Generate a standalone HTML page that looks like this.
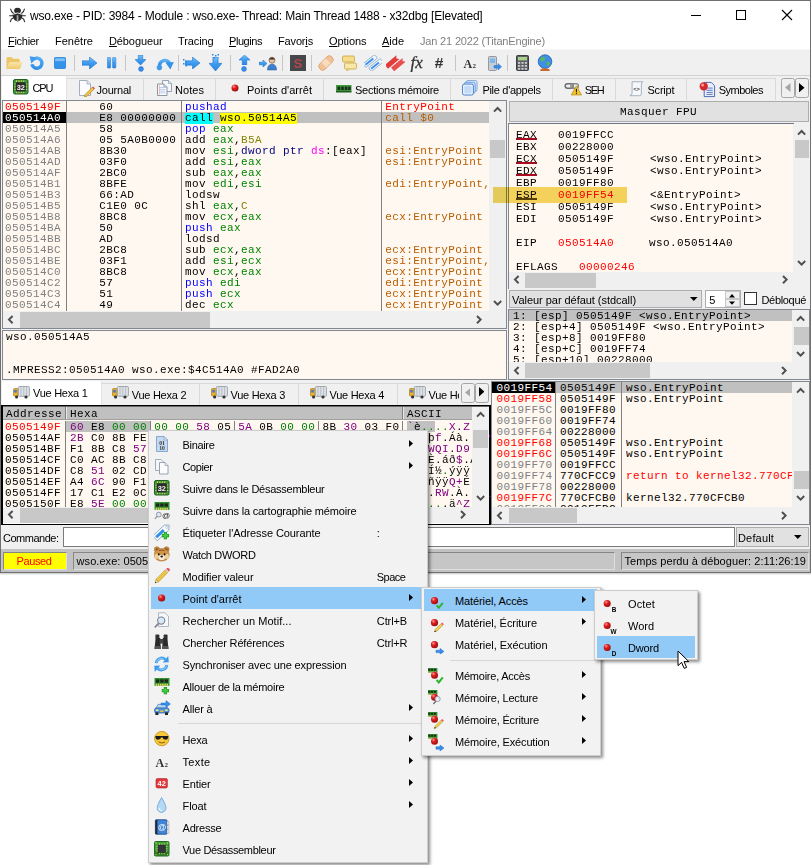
<!DOCTYPE html>
<html><head><meta charset="utf-8"><title>x32dbg</title><style>
html,body{margin:0;padding:0}
body{width:811px;height:865px;background:#fff;position:relative;overflow:hidden;font-family:'Liberation Sans',sans-serif}
body div,body svg{position:absolute;box-sizing:content-box}
.s{white-space:pre;font-family:'Liberation Sans',sans-serif}
.m{white-space:pre;font-family:'Liberation Mono',monospace;font-size:11px;line-height:11px;height:11px;letter-spacing:0.4px}
.m span{display:inline-block;height:11px;position:static}
u{text-decoration:underline}
</style></head><body>
<div style="left:0px;top:0px;width:811px;height:573px;background:#f0f0f0;"></div>
<div style="left:0px;top:0px;width:811px;height:1px;background:#6f6f6f;"></div>
<div style="left:0px;top:0px;width:1px;height:573px;background:#6f6f6f;"></div>
<div style="left:810px;top:0px;width:1px;height:573px;background:#6f6f6f;"></div>
<div style="left:0px;top:572px;width:811px;height:1px;background:#6f6f6f;"></div>
<div style="left:0px;top:573px;width:811px;height:1px;background:#d4d4d4;"></div>
<div style="left:0px;top:574px;width:811px;height:1px;background:#eeeeee;"></div>
<div style="left:1px;top:1px;width:809px;height:48px;background:#fff;"></div>
<div style="left:1px;top:49px;width:809px;height:1px;background:#f7f7f7;"></div>
<svg style="left:9px;top:6px" width="17" height="17" viewBox="0 0 17 17"><g fill="#2b2b2e" stroke="#2b2b2e" stroke-linecap="round">
<ellipse cx="8.5" cy="4.6" rx="3.4" ry="2.9" stroke="none"/>
<path d="M3.6,8.2 Q8.5,5.2 13.4,8.2 L13,11.5 Q11.5,15.2 8.5,15.4 Q5.5,15.2 4,11.5 Z" stroke="none"/>
<path d="M0.6,9.7 H16.4" stroke-width="1.1" fill="none"/>
<path d="M4.6,7.4 Q2,6 1.6,3" stroke-width="1.1" fill="none"/>
<path d="M12.4,7.4 Q15,6 15.4,3" stroke-width="1.1" fill="none"/>
<path d="M4.4,11.8 Q1.8,12.6 1.4,15.6" stroke-width="1.1" fill="none"/>
<path d="M12.6,11.8 Q15.2,12.6 15.6,15.6" stroke-width="1.1" fill="none"/>
<rect x="7.7" y="9.2" width="1.7" height="5.8" fill="#a9aaad" stroke="none"/><path d="M4.4,8.1 Q8.5,5.6 12.6,8.1" stroke="#fff" stroke-width="0.9" fill="none"/>
</g></svg>
<div class="s" style="left:30px;top:7.84px;font-size:12px;line-height:16px;letter-spacing:-0.182px;color:#000;">wso.exe - PID: 3984 - Module : wso.exe- Thread: Main Thread 1488 - x32dbg [Elevated]</div>
<div style="left:691px;top:15px;width:10px;height:1px;background:#000;"></div>
<div style="left:736px;top:10px;width:8px;height:8px;background:transparent;border:1px solid #000;"></div>
<svg style="left:781px;top:9px" width="12" height="12" viewBox="0 0 12 12"><path d="M1,1 L11,11 M11,1 L1,11" stroke="#000" stroke-width="1.1" fill="none"/></svg>
<div class="s" style="left:8px;top:33.69px;font-size:11px;line-height:15px;letter-spacing:-0.288px;color:#000;"><u>F</u>ichier</div>
<div class="s" style="left:55px;top:33.69px;font-size:11px;line-height:15px;letter-spacing:0.011px;color:#000;">Fenêtre</div>
<div class="s" style="left:109px;top:33.69px;font-size:11px;line-height:15px;letter-spacing:-0.104px;color:#000;"><u>D</u>ébogueur</div>
<div class="s" style="left:178px;top:33.69px;font-size:11px;line-height:15px;letter-spacing:-0.112px;color:#000;">Tracin<u>g</u></div>
<div class="s" style="left:229px;top:33.69px;font-size:11px;line-height:15px;letter-spacing:-0.440px;color:#000;"><u>P</u>lugins</div>
<div class="s" style="left:278px;top:33.69px;font-size:11px;line-height:15px;letter-spacing:-0.152px;color:#000;">Favor<u>i</u>s</div>
<div class="s" style="left:329px;top:33.69px;font-size:11px;line-height:15px;letter-spacing:-0.060px;color:#000;"><u>O</u>ptions</div>
<div class="s" style="left:382px;top:33.69px;font-size:11px;line-height:15px;letter-spacing:-0.008px;color:#000;"><u>A</u>ide</div>
<div class="s" style="left:420px;top:33.69px;font-size:11px;line-height:15px;letter-spacing:-0.169px;color:#808080;">Jan 21 2022 (TitanEngine)</div>
<div style="left:74px;top:55px;width:1px;height:16px;background:#c6c6c6;"></div>
<div style="left:125px;top:55px;width:1px;height:16px;background:#c6c6c6;"></div>
<div style="left:178px;top:55px;width:1px;height:16px;background:#c6c6c6;"></div>
<div style="left:230px;top:55px;width:1px;height:16px;background:#c6c6c6;"></div>
<div style="left:282px;top:55px;width:1px;height:16px;background:#c6c6c6;"></div>
<div style="left:311px;top:55px;width:1px;height:16px;background:#c6c6c6;"></div>
<div style="left:455px;top:55px;width:1px;height:16px;background:#c6c6c6;"></div>
<div style="left:507px;top:55px;width:1px;height:16px;background:#c6c6c6;"></div>
<svg style="left:0;top:0" width="0" height="0"><defs><linearGradient id="bg" x1="0" y1="0" x2="0" y2="1"><stop offset="0" stop-color="#7cc4fa"/><stop offset="0.5" stop-color="#3d9bef"/><stop offset="1" stop-color="#2a86e0"/></linearGradient><linearGradient id="fg" x1="0" y1="0" x2="0" y2="1"><stop offset="0" stop-color="#f9e6ad"/><stop offset="1" stop-color="#f0c96a"/></linearGradient></defs></svg>
<svg style="left:5px;top:56px" width="18" height="15" viewBox="0 0 18 15"><path d="M1.5,2.2 Q1.5,1 2.6,1 H6.4 L8,2.8 H13.6 Q14.6,2.8 14.6,3.8 V6 H1.5 Z" fill="#edc566"/><path d="M1.5,13 V5 H14.6 V6.2 H16.6 Q17.4,6.2 17.1,7 L14.8,13 Z" fill="#edc566"/><path d="M1.6,13 L4,6.6 Q4.2,6 5,6 H16.6 Q17.4,6 17.1,6.8 L14.8,12.6 Q14.6,13 14,13 Z" fill="url(#fg)"/></svg>
<svg style="left:29px;top:55px" width="16" height="16" viewBox="0 0 16 16"><path d="M4.4,4.4 A5.1,5.1 0 1 1 2.9,9.4" fill="none" stroke="url(#bg)" stroke-width="3.2"/><path d="M4.4,4.4 A5.1,5.1 0 1 1 2.9,9.4" fill="none" stroke="#3d9bef" stroke-width="3.2" opacity="0.55"/><polygon points="0.6,1.2 8,2.6 2.4,8.4" fill="#3d9bef"/></svg>
<svg style="left:53.5px;top:56.5px" width="12" height="12" viewBox="0 0 12 12"><rect x="0.5" y="0.5" width="11" height="11" rx="0.8" fill="#3492ea" stroke="#2a7fd6" stroke-width="0.8"/><rect x="1.2" y="1.2" width="9.6" height="3" fill="#79c0f8"/></svg>
<svg style="left:82px;top:57px" width="15" height="12" viewBox="0 0 15 12"><path d="M0,3.84 H7.5 V0 L15,6 L7.5,12 V8.16 H0 Z" fill="url(#bg)" stroke="#2277cc" stroke-width="0.6"/></svg>
<svg style="left:107px;top:56.5px" width="10" height="12" viewBox="0 0 10 12"><rect x="0.4" y="0.4" width="3.2" height="10.6" rx="0.6" fill="url(#bg)" stroke="#2a7fd6" stroke-width="0.6"/><rect x="5.6" y="0.4" width="3.2" height="10.6" rx="0.6" fill="url(#bg)" stroke="#2a7fd6" stroke-width="0.6"/></svg>
<svg style="left:135px;top:55px" width="11" height="10" viewBox="0 0 11 10"><path d="M3.3,0 V4.5 H0 L5.5,10 L11,4.5 H7.7 V0 Z" fill="url(#bg)" stroke="#2277cc" stroke-width="0.6"/></svg>
<svg style="left:138px;top:66px" width="6" height="6" viewBox="0 0 6 6"><circle cx="3" cy="3" r="2.4" fill="#3a8ee8" stroke="#1f6fcb" stroke-width="0.6"/></svg>
<svg style="left:156px;top:56px" width="18" height="15" viewBox="0 0 18 15"><path d="M3.4,9.4 A5.6,5.8 0 0 1 13.4,6.6" fill="none" stroke="url(#bg)" stroke-width="3.2"/><path d="M3.4,9.4 A5.6,5.8 0 0 1 13.4,6.6" fill="none" stroke="#3d9bef" stroke-width="3.2" opacity="0.5"/><polygon points="9.4,6.6 17.8,6 14.4,13.4" fill="#3492ea"/><circle cx="3.4" cy="11.6" r="2.4" fill="#3d9bef" stroke="#2a7fd6" stroke-width="0.6"/></svg>
<svg style="left:185px;top:57px" width="15" height="12" viewBox="0 0 15 12"><path d="M0,3.84 H7.5 V0 L15,6 L7.5,12 V8.16 H0 Z" fill="url(#bg)" stroke="#2277cc" stroke-width="0.6"/></svg>
<svg style="left:183px;top:58px" width="5" height="10" viewBox="0 0 5 10"><g fill="#2f86e0"><rect x="0" y="1" width="1.5" height="1.5"/><rect x="2.5" y="3" width="1.5" height="1.5"/><rect x="0" y="5" width="1.5" height="1.5"/><rect x="2.5" y="7" width="1.5" height="1.5"/></g></svg>
<svg style="left:208.5px;top:57px" width="13" height="14" viewBox="0 0 13 14"><path d="M3.9,0 V6.3 H0 L6.5,14 L13,6.3 H9.1 V0 Z" fill="url(#bg)" stroke="#2277cc" stroke-width="0.6"/></svg>
<svg style="left:211px;top:54px" width="9" height="5" viewBox="0 0 9 5"><g fill="#2f86e0"><rect x="1" y="0" width="1.5" height="1.5"/><rect x="4" y="1" width="1.5" height="1.5"/><rect x="6.5" y="0" width="1.5" height="1.5"/><rect x="2.5" y="3" width="1.5" height="1.5"/></g></svg>
<svg style="left:239px;top:55px" width="11" height="10" viewBox="0 0 11 10"><path d="M3.3,10 V5 H0 L5.5,0 L11,5 H7.7 V10 Z" fill="url(#bg)" stroke="#2277cc" stroke-width="0.6"/></svg>
<svg style="left:241px;top:66px" width="6" height="6" viewBox="0 0 6 6"><circle cx="3" cy="3" r="2.4" fill="#3a8ee8" stroke="#1f6fcb" stroke-width="0.6"/></svg>
<svg style="left:259px;top:60px" width="8" height="7" viewBox="0 0 8 7"><path d="M0,2.24 H4 V0 L8,3.5 L4,7 V4.76 H0 Z" fill="url(#bg)" stroke="#2277cc" stroke-width="0.6"/></svg>
<svg style="left:267px;top:56px" width="10" height="15" viewBox="0 0 10 15"><circle cx="5" cy="4.2" r="3" fill="#e9c49a" stroke="#5a4a3a" stroke-width="0.6"/><path d="M2,3.4 Q5,-0.6 8,3.4" fill="#3a2a20"/><path d="M0.4,14 Q0.6,8.2 5,8.2 Q9.4,8.2 9.6,14 Z" fill="#3f7fd0" stroke="#245a9c" stroke-width="0.5"/></svg>
<svg style="left:290px;top:55px" width="16" height="16" viewBox="0 0 16 16"><rect width="16" height="16" fill="#45474a"/><text x="8" y="13" font-family="Liberation Sans" font-weight="bold" font-size="13" fill="#b4464e" text-anchor="middle">S</text></svg>
<svg style="left:317px;top:55px" width="18" height="16" viewBox="0 0 18 16"><g transform="rotate(-45 9 8)"><rect x="0.5" y="4.2" width="17" height="7.6" rx="3.6" fill="#f2c197" stroke="#d89a62" stroke-width="0.7"/><rect x="6" y="4.6" width="6" height="6.8" fill="#f9dcc0"/></g></svg>
<svg style="left:341px;top:55px" width="17" height="16" viewBox="0 0 17 16"><rect x="1.5" y="1" width="12" height="6" rx="1.2" fill="#f6dd8c" stroke="#c9a23c" stroke-width="0.8"/><rect x="3.5" y="8" width="12" height="6" rx="1.2" fill="#f9e7a8" stroke="#c9a23c" stroke-width="0.8"/><path d="M6,14 L6,16 L8.5,14" fill="#f9e7a8" stroke="#c9a23c" stroke-width="0.7"/></svg>
<svg style="left:364px;top:55px" width="18" height="16" viewBox="0 0 18 16"><g transform="rotate(-38 9 8)"><rect x="0.5" y="2.4" width="15" height="4.6" rx="1.2" fill="#f2f7fd" stroke="#8fb2d8" stroke-width="0.9"/><rect x="2" y="3.8" width="10" height="1.8" fill="#3a8ee8"/><rect x="2.5" y="9" width="15" height="4.6" rx="1.2" fill="#f2f7fd" stroke="#8fb2d8" stroke-width="0.9"/><rect x="4" y="10.4" width="10" height="1.8" fill="#3a8ee8"/></g></svg>
<svg style="left:386px;top:55px" width="19" height="16" viewBox="0 0 19 16"><g transform="rotate(-40 9 8)"><path d="M0,3 H15 L13,5.4 L15,7.8 H0 Z" fill="#e23b3b"/><path d="M3,9 H18 L16,11.4 L18,13.8 H3 Z" fill="#e85050"/></g></svg>
<svg style="left:409px;top:54px" width="20" height="18" viewBox="0 0 20 18"><text x="1.5" y="14" font-family="Liberation Serif" font-style="italic" font-size="17" fill="#333" stroke="#333" stroke-width="0.3">fx</text></svg>
<svg style="left:434px;top:54px" width="14" height="18" viewBox="0 0 14 18"><text x="0.5" y="14.4" font-family="Liberation Sans" font-style="italic" font-weight="bold" font-size="15.5" fill="#333">#</text></svg>
<svg style="left:463px;top:55px" width="16" height="16" viewBox="0 0 16 16"><text x="0.5" y="12.5" font-family="Liberation Serif" font-weight="bold" font-size="12" fill="#333">A</text><text x="9.5" y="12.5" font-family="Liberation Serif" font-weight="bold" font-size="7" fill="#333">2</text></svg>
<svg style="left:487px;top:54px" width="15" height="18" viewBox="0 0 15 18"><rect x="1.5" y="2.5" width="8" height="14" rx="1" fill="#c9ced6" stroke="#7d8794" stroke-width="0.8"/><rect x="3" y="4.5" width="5" height="4.5" fill="#7db7ee"/><path d="M7,11.5 H11 V9.5 L14.5,12.8 L11,16 V14 H7 Z" fill="#3a8ee8" stroke="#1f6fcb" stroke-width="0.5"/></svg>
<svg style="left:516px;top:55px" width="13" height="16" viewBox="0 0 13 16"><rect x="0.5" y="0.5" width="12" height="15" rx="1" fill="#5c5f63" stroke="#3c3e41"/><rect x="2" y="2" width="9" height="3.4" fill="#a9d18a"/><g fill="#c9cbce"><rect x="2" y="7" width="2.2" height="1.8"/><rect x="5.4" y="7" width="2.2" height="1.8"/><rect x="8.8" y="7" width="2.2" height="1.8"/><rect x="2" y="10" width="2.2" height="1.8"/><rect x="5.4" y="10" width="2.2" height="1.8"/><rect x="8.8" y="10" width="2.2" height="1.8"/><rect x="2" y="13" width="2.2" height="1.8"/><rect x="5.4" y="13" width="2.2" height="1.8"/><rect x="8.8" y="13" width="2.2" height="1.8"/></g></svg>
<svg style="left:537px;top:54px" width="16" height="18" viewBox="0 0 16 18"><circle cx="8" cy="7.6" r="6.8" fill="#3f8fe6" stroke="#1f5fb0" stroke-width="0.8"/><path d="M4,3.4 Q7,2 8.6,4.6 Q7,7.6 4.8,7.4 Q2.6,6 4,3.4 Z M9.4,8 Q12.6,7 13,10 Q11.4,12.8 9.8,11.6 Z" fill="#58b858"/><path d="M3.4,15.2 Q8,13.4 12.6,15.2 L12.6,17 H3.4 Z" fill="#c96a2c"/></svg>
<div style="left:1px;top:74.6px;width:809px;height:1px;background:#d2d2d2;"></div>
<div style="left:67px;top:78px;width:77px;height:22px;background:#f0f0f0;"></div>
<div style="left:67px;top:78px;width:77px;height:1px;background:#d9d9d9;"></div>
<div style="left:143px;top:78px;width:1px;height:22px;background:#d9d9d9;"></div>
<div class="s" style="left:96.6px;top:82.69px;font-size:11px;line-height:15px;letter-spacing:-0.240px;color:#000;">Journal</div>
<div style="left:144px;top:78px;width:72px;height:22px;background:#f0f0f0;"></div>
<div style="left:144px;top:78px;width:72px;height:1px;background:#d9d9d9;"></div>
<div style="left:215px;top:78px;width:1px;height:22px;background:#d9d9d9;"></div>
<div class="s" style="left:175px;top:82.69px;font-size:11px;line-height:15px;letter-spacing:0.050px;color:#000;">Notes</div>
<div style="left:216px;top:78px;width:108px;height:22px;background:#f0f0f0;"></div>
<div style="left:216px;top:78px;width:108px;height:1px;background:#d9d9d9;"></div>
<div style="left:323px;top:78px;width:1px;height:22px;background:#d9d9d9;"></div>
<div class="s" style="left:247px;top:82.69px;font-size:11px;line-height:15px;letter-spacing:0.038px;color:#000;">Points d'arrêt</div>
<div style="left:324px;top:78px;width:127px;height:22px;background:#f0f0f0;"></div>
<div style="left:324px;top:78px;width:127px;height:1px;background:#d9d9d9;"></div>
<div style="left:450px;top:78px;width:1px;height:22px;background:#d9d9d9;"></div>
<div class="s" style="left:355px;top:82.69px;font-size:11px;line-height:15px;letter-spacing:-0.253px;color:#000;">Sections mémoire</div>
<div style="left:451px;top:78px;width:102px;height:22px;background:#f0f0f0;"></div>
<div style="left:451px;top:78px;width:102px;height:1px;background:#d9d9d9;"></div>
<div style="left:552px;top:78px;width:1px;height:22px;background:#d9d9d9;"></div>
<div class="s" style="left:482.4px;top:82.69px;font-size:11px;line-height:15px;letter-spacing:-0.295px;color:#000;">Pile d'appels</div>
<div style="left:553px;top:78px;width:63px;height:22px;background:#f0f0f0;"></div>
<div style="left:553px;top:78px;width:63px;height:1px;background:#d9d9d9;"></div>
<div style="left:615px;top:78px;width:1px;height:22px;background:#d9d9d9;"></div>
<div class="s" style="left:584.8px;top:82.69px;font-size:11px;line-height:15px;letter-spacing:-1.375px;color:#000;">SEH</div>
<div style="left:616px;top:78px;width:71px;height:22px;background:#f0f0f0;"></div>
<div style="left:616px;top:78px;width:71px;height:1px;background:#d9d9d9;"></div>
<div style="left:686px;top:78px;width:1px;height:22px;background:#d9d9d9;"></div>
<div class="s" style="left:647.5px;top:82.69px;font-size:11px;line-height:15px;letter-spacing:-0.221px;color:#000;">Script</div>
<div style="left:687px;top:78px;width:89px;height:22px;background:#f0f0f0;"></div>
<div style="left:687px;top:78px;width:89px;height:1px;background:#d9d9d9;"></div>
<div style="left:775px;top:78px;width:1px;height:22px;background:#d9d9d9;"></div>
<div class="s" style="left:718.7px;top:82.69px;font-size:11px;line-height:15px;letter-spacing:-0.500px;color:#000;">Symboles</div>
<div style="left:1.5px;top:75.5px;width:65px;height:24.5px;background:#fff;"></div>
<div style="left:66px;top:76px;width:1px;height:24px;background:#e2e2e2;"></div>
<div class="s" style="left:32.5px;top:81.39px;font-size:11px;line-height:15px;letter-spacing:-1.078px;color:#000;">CPU</div>
<div style="left:781px;top:78px;width:12px;height:18px;background:#f0f0f0;border:1px solid #a6a6a6;border-radius:2.5px"></div>
<div style="left:795px;top:78px;width:12px;height:18px;background:#f0f0f0;border:1px solid #a6a6a6;border-radius:2.5px"></div>
<svg style="left:785px;top:83px" width="5.5" height="9" viewBox="0 0 5.5 9"><polygon points="5.5,0 0,4.5 5.5,9" fill="#a6a6a6"/></svg>
<svg style="left:799.3px;top:82.5px" width="5.5" height="9.4" viewBox="0 0 5.5 9.4"><polygon points="0,0 5.5,4.7 0,9.4" fill="#000"/></svg>
<svg style="left:12.8px;top:78.8px" width="16" height="16" viewBox="0 0 16 16"><rect x="0.5" y="0.5" width="14.5" height="14.5" rx="1.5" fill="#3c9a3c" stroke="#1e5e1e" stroke-width="1"/><g fill="#e8d45a"><rect x="3" y="1.4" width="1" height="1.6"/><rect x="5.4" y="1.4" width="1" height="1.6"/><rect x="7.8" y="1.4" width="1" height="1.6"/><rect x="10.2" y="1.4" width="1" height="1.6"/><rect x="3" y="12.6" width="1" height="1.6"/><rect x="5.4" y="12.6" width="1" height="1.6"/><rect x="7.8" y="12.6" width="1" height="1.6"/><rect x="10.2" y="12.6" width="1" height="1.6"/><rect x="1.3" y="4.6" width="1.5" height="0.9"/><rect x="1.3" y="7.3" width="1.5" height="0.9"/><rect x="1.3" y="10" width="1.5" height="0.9"/><rect x="12.8" y="4.6" width="1.5" height="0.9"/><rect x="12.8" y="7.3" width="1.5" height="0.9"/><rect x="12.8" y="10" width="1.5" height="0.9"/></g><rect x="2.8" y="3.2" width="10" height="9.2" rx="0.8" fill="#2a2d2a"/><text x="7.8" y="10.6" font-family="Liberation Sans" font-weight="bold" font-size="7.4" text-anchor="middle" fill="#f4f4f4">32</text></svg>
<svg style="left:78.3px;top:80px" width="17" height="17" viewBox="0 0 17 17"><path d="M1.5,0.5 H9 L12.5,4 V15.5 H1.5 Z" fill="#fafcff" stroke="#9aa7b8" stroke-width="0.9"/><path d="M9,0.5 V4 H12.5" fill="#e3e9f2" stroke="#9aa7b8" stroke-width="0.8"/><path d="M7,14.6 L14.6,7 L16.4,8.8 L8.8,16.4 L6.4,16.9 Z" fill="#f0c24a" stroke="#a87a18" stroke-width="0.6"/><path d="M14.6,7 L16.4,8.8" stroke="#d85a5a" stroke-width="1.6"/></svg>
<svg style="left:157px;top:80px" width="16" height="17" viewBox="0 0 16 17"><path d="M5.5,0.5 H11.5 L14.5,3.5 V11.5 H5.5 Z" fill="#f4f6fa" stroke="#8d99a8" stroke-width="0.9"/><path d="M11.5,0.5 V3.5 H14.5" fill="#dfe5ee" stroke="#8d99a8" stroke-width="0.7"/><path d="M0.5,4 H7 L10,7 V15.5 H0.5 Z" fill="#fdfdff" stroke="#7f8b9a" stroke-width="0.9"/><path d="M7,4 V7 H10" fill="#e3e9f2" stroke="#7f8b9a" stroke-width="0.7"/><g stroke="#9db8e6" stroke-width="0.7"><path d="M2.6,7.5 H8.4 M2.6,9.3 H8.4 M2.6,11.1 H8.4 M2.6,12.9 H8.4"/></g><path d="M2.4,5 V14.6" stroke="#e08a8a" stroke-width="0.6"/></svg>
<svg style="left:231px;top:84px" width="8" height="8" viewBox="0 0 8 8"><defs><radialGradient id="g231_84" cx="0.35" cy="0.3" r="0.8"><stop offset="0" stop-color="#ff9a9a"/><stop offset="0.35" stop-color="#e02020"/><stop offset="1" stop-color="#8e0a0a"/></radialGradient></defs><circle cx="4" cy="4" r="3.5" fill="url(#g231_84)"/></svg>
<svg style="left:336px;top:84.5px" width="15.5" height="8.5" viewBox="0 0 15.5 8.5"><rect x="0" y="0" width="15.5" height="6" fill="#3c9a3c"/><rect x="0" y="5.9" width="15.5" height="1.6" fill="#1e5e1e"/><g fill="#1d2a1d"><rect x="1.6" y="1.6" width="2.6" height="3.4"/><rect x="5.2" y="1.6" width="2.6" height="3.4"/><rect x="8.8" y="1.6" width="2.6" height="3.4"/><rect x="12.2" y="1.6" width="2.4" height="3.4"/></g></svg>
<svg style="left:462px;top:80px" width="15.5" height="16.4" viewBox="0 0 17 18"><rect x="4.5" y="0.5" width="12" height="12" rx="2" fill="#dbe9fb" stroke="#6f9bd8" stroke-width="0.9"/><rect x="2.5" y="2.5" width="12" height="12" rx="2" fill="#cfe2fa" stroke="#5f8fd2" stroke-width="0.9"/><rect x="0.5" y="4.5" width="12" height="12" rx="2" fill="#e8f1fd" stroke="#3f78c8" stroke-width="1"/><rect x="2.5" y="6.5" width="8" height="8" rx="1" fill="#c2dbf8"/></svg>
<svg style="left:564px;top:81px" width="20" height="15" viewBox="0 0 20 15"><rect x="1.2" y="2.8" width="8" height="4.4" rx="2.2" fill="none" stroke="#6e6e6e" stroke-width="1.5"/><rect x="6.8" y="2.8" width="7.6" height="4.4" rx="2.2" fill="none" stroke="#8a8a8a" stroke-width="1.5"/><polygon points="12.4,4.8 17.6,14 7.2,14" fill="#f5c52a" stroke="#a8820a" stroke-width="0.6"/><rect x="11.9" y="7.8" width="1.1" height="3.4" fill="#222"/><rect x="11.9" y="11.8" width="1.1" height="1.1" fill="#222"/></svg>
<svg style="left:628.5px;top:80.5px" width="15" height="16" viewBox="0 0 17 18"><path d="M3.5,0.8 H15.5 Q14,2 14,4 V14.5 Q14,16.4 12,16.6 H1 Q3.5,16 3.5,13.5 Z" fill="#f6f8fb" stroke="#93a0b2" stroke-width="0.9"/><text x="8.6" y="11.4" font-family="Liberation Mono" font-size="6.5" font-weight="bold" text-anchor="middle" fill="#444">&lt;&gt;</text></svg>
<svg style="left:699px;top:80.5px" width="17" height="17" viewBox="0 0 18 18"><path d="M5.5,1.5 H13 L16.5,5 V16.5 H5.5 Z" fill="#e9eefc" stroke="#3a56a8" stroke-width="0.9"/><g stroke="#4a66b8" stroke-width="0.9"><path d="M8,7.5 H14.5 M8,9.8 H14.5 M8,12.1 H14.5 M8,14.2 H14.5"/></g><circle cx="5" cy="5.6" r="4.4" fill="#d92a2a"/><circle cx="3.8" cy="4.2" r="1.6" fill="#f59a9a"/></svg>
<div style="left:2px;top:100px;width:505px;height:229px;background:#828790;"></div>
<div style="left:3px;top:101px;width:486px;height:210px;background:#fff8f0;"></div>
<div style="left:489px;top:101px;width:17px;height:210px;background:#f0f0f0;"></div>
<div style="left:3px;top:311px;width:503px;height:17px;background:#f0f0f0;"></div>
<div style="left:3px;top:112px;width:486px;height:11px;background:#c0c0c0;"></div>
<div style="left:66px;top:101px;width:1px;height:210px;background:#808080;"></div>
<div style="left:181px;top:101px;width:1px;height:210px;background:#808080;"></div>
<div style="left:381px;top:101px;width:1px;height:210px;background:#808080;"></div>
<div class="m" style="left:5px;top:101.6px;color:#ff0000;">0505149F</div>
<div class="m" style="left:99.3px;top:101.6px;color:#000;">60</div>
<div class="m" style="left:185px;top:101.6px;color:#000;"><span style="color:#0000ff;">pushad</span></div>
<div class="m" style="left:385.2px;top:101.6px;color:#ff0000;">EntryPoint</div>
<div style="left:3px;top:112px;width:63px;height:11px;background:#000;"></div>
<div class="m" style="left:5px;top:112.6px;color:#fff;">050514A0</div>
<div class="m" style="left:99.3px;top:112.6px;color:#000;">E8 00000000</div>
<div class="m" style="left:185px;top:112.6px;color:#000;"><span style="color:#000;background:#00ffff;">call</span> <span style="color:#000;background:#ffff00;">wso.50514A5</span></div>
<div class="m" style="left:385.2px;top:112.6px;color:#b85c00;">call $0</div>
<div class="m" style="left:5px;top:123.6px;color:#808080;">050514A5</div>
<div class="m" style="left:99.3px;top:123.6px;color:#000;">58</div>
<div class="m" style="left:185px;top:123.6px;color:#000;"><span style="color:#0000ff;">pop</span> <span style="color:#008300;">eax</span></div>
<div class="m" style="left:5px;top:134.6px;color:#808080;">050514A6</div>
<div class="m" style="left:99.3px;top:134.6px;color:#000;">05 5A0B0000</div>
<div class="m" style="left:185px;top:134.6px;color:#000;"><span style="color:#000;">add </span><span style="color:#008300;">eax</span><span style="color:#000;">,</span><span style="color:#828200;">B5A</span></div>
<div class="m" style="left:5px;top:145.6px;color:#808080;">050514AB</div>
<div class="m" style="left:99.3px;top:145.6px;color:#000;">8B30</div>
<div class="m" style="left:185px;top:145.6px;color:#000;"><span style="color:#000;">mov </span><span style="color:#008300;">esi</span><span style="color:#000;">,</span><span style="color:#000080;">dword ptr </span><span style="color:#ff00ff;">ds</span><span style="color:#000;">:[eax]</span></div>
<div class="m" style="left:385.2px;top:145.6px;color:#b85c00;">esi:EntryPoint</div>
<div class="m" style="left:5px;top:156.6px;color:#808080;">050514AD</div>
<div class="m" style="left:99.3px;top:156.6px;color:#000;">03F0</div>
<div class="m" style="left:185px;top:156.6px;color:#000;"><span style="color:#000;">add </span><span style="color:#008300;">esi</span><span style="color:#000;">,</span><span style="color:#008300;">eax</span></div>
<div class="m" style="left:385.2px;top:156.6px;color:#b85c00;">esi:EntryPoint</div>
<div class="m" style="left:5px;top:167.6px;color:#808080;">050514AF</div>
<div class="m" style="left:99.3px;top:167.6px;color:#000;">2BC0</div>
<div class="m" style="left:185px;top:167.6px;color:#000;"><span style="color:#000;">sub </span><span style="color:#008300;">eax</span><span style="color:#000;">,</span><span style="color:#008300;">eax</span></div>
<div class="m" style="left:5px;top:178.6px;color:#808080;">050514B1</div>
<div class="m" style="left:99.3px;top:178.6px;color:#000;">8BFE</div>
<div class="m" style="left:185px;top:178.6px;color:#000;"><span style="color:#000;">mov </span><span style="color:#008300;">edi</span><span style="color:#000;">,</span><span style="color:#008300;">esi</span></div>
<div class="m" style="left:385.2px;top:178.6px;color:#b85c00;">edi:EntryPoint,</div>
<div class="m" style="left:5px;top:189.6px;color:#808080;">050514B3</div>
<div class="m" style="left:99.3px;top:189.6px;color:#000;">66:AD</div>
<div class="m" style="left:185px;top:189.6px;color:#000;"><span style="color:#000;">lodsw</span></div>
<div class="m" style="left:5px;top:200.6px;color:#808080;">050514B5</div>
<div class="m" style="left:99.3px;top:200.6px;color:#000;">C1E0 0C</div>
<div class="m" style="left:185px;top:200.6px;color:#000;"><span style="color:#000;">shl </span><span style="color:#008300;">eax</span><span style="color:#000;">,</span><span style="color:#828200;">C</span></div>
<div class="m" style="left:5px;top:211.6px;color:#808080;">050514B8</div>
<div class="m" style="left:99.3px;top:211.6px;color:#000;">8BC8</div>
<div class="m" style="left:185px;top:211.6px;color:#000;"><span style="color:#000;">mov </span><span style="color:#008300;">ecx</span><span style="color:#000;">,</span><span style="color:#008300;">eax</span></div>
<div class="m" style="left:385.2px;top:211.6px;color:#b85c00;">ecx:EntryPoint</div>
<div class="m" style="left:5px;top:222.6px;color:#808080;">050514BA</div>
<div class="m" style="left:99.3px;top:222.6px;color:#000;">50</div>
<div class="m" style="left:185px;top:222.6px;color:#000;"><span style="color:#0000ff;">push</span> <span style="color:#008300;">eax</span></div>
<div class="m" style="left:5px;top:233.6px;color:#808080;">050514BB</div>
<div class="m" style="left:99.3px;top:233.6px;color:#000;">AD</div>
<div class="m" style="left:185px;top:233.6px;color:#000;"><span style="color:#000;">lodsd</span></div>
<div class="m" style="left:5px;top:244.6px;color:#808080;">050514BC</div>
<div class="m" style="left:99.3px;top:244.6px;color:#000;">2BC8</div>
<div class="m" style="left:185px;top:244.6px;color:#000;"><span style="color:#000;">sub </span><span style="color:#008300;">ecx</span><span style="color:#000;">,</span><span style="color:#008300;">eax</span></div>
<div class="m" style="left:385.2px;top:244.6px;color:#b85c00;">ecx:EntryPoint</div>
<div class="m" style="left:5px;top:255.6px;color:#808080;">050514BE</div>
<div class="m" style="left:99.3px;top:255.6px;color:#000;">03F1</div>
<div class="m" style="left:185px;top:255.6px;color:#000;"><span style="color:#000;">add </span><span style="color:#008300;">esi</span><span style="color:#000;">,</span><span style="color:#008300;">ecx</span></div>
<div class="m" style="left:385.2px;top:255.6px;color:#b85c00;">esi:EntryPoint,</div>
<div class="m" style="left:5px;top:266.6px;color:#808080;">050514C0</div>
<div class="m" style="left:99.3px;top:266.6px;color:#000;">8BC8</div>
<div class="m" style="left:185px;top:266.6px;color:#000;"><span style="color:#000;">mov </span><span style="color:#008300;">ecx</span><span style="color:#000;">,</span><span style="color:#008300;">eax</span></div>
<div class="m" style="left:385.2px;top:266.6px;color:#b85c00;">ecx:EntryPoint</div>
<div class="m" style="left:5px;top:277.6px;color:#808080;">050514C2</div>
<div class="m" style="left:99.3px;top:277.6px;color:#000;">57</div>
<div class="m" style="left:185px;top:277.6px;color:#000;"><span style="color:#0000ff;">push</span> <span style="color:#008300;">edi</span></div>
<div class="m" style="left:385.2px;top:277.6px;color:#b85c00;">edi:EntryPoint</div>
<div class="m" style="left:5px;top:288.6px;color:#808080;">050514C3</div>
<div class="m" style="left:99.3px;top:288.6px;color:#000;">51</div>
<div class="m" style="left:185px;top:288.6px;color:#000;"><span style="color:#0000ff;">push</span> <span style="color:#008300;">ecx</span></div>
<div class="m" style="left:385.2px;top:288.6px;color:#b85c00;">ecx:EntryPoint</div>
<div class="m" style="left:5px;top:299.6px;color:#808080;">050514C4</div>
<div class="m" style="left:99.3px;top:299.6px;color:#000;">49</div>
<div class="m" style="left:185px;top:299.6px;color:#000;"><span style="color:#000;">dec </span><span style="color:#008300;">ecx</span></div>
<div class="m" style="left:385.2px;top:299.6px;color:#b85c00;">ecx:EntryPoint</div>
<svg style="left:491.9px;top:106.2px" width="11.2" height="7.6"><polyline points="2.00,5.60 5.60,2.00 9.20,5.60" fill="none" stroke="#505050" stroke-width="2"/></svg>
<svg style="left:491.9px;top:298.7px" width="11.2" height="7.6"><polyline points="2.00,2.00 5.60,5.60 9.20,2.00" fill="none" stroke="#505050" stroke-width="2"/></svg>
<div style="left:490px;top:140px;width:15px;height:18px;background:#c8c8c8;"></div>
<svg style="left:7.2px;top:313.9px" width="7.6" height="11.2"><polyline points="5.60,2.00 2.00,5.60 5.60,9.20" fill="none" stroke="#505050" stroke-width="2"/></svg>
<svg style="left:475.2px;top:313.9px" width="7.6" height="11.2"><polyline points="2.00,2.00 5.60,5.60 2.00,9.20" fill="none" stroke="#505050" stroke-width="2"/></svg>
<div style="left:20px;top:312px;width:190px;height:16px;background:#c8c8c8;"></div>
<div style="left:2px;top:330px;width:505px;height:50px;background:#828790;"></div>
<div style="left:3px;top:331px;width:503px;height:48px;background:#fff8f0;"></div>
<div class="m" style="left:6px;top:331.6px;color:#000;">wso.050514A5</div>
<div class="m" style="left:6px;top:364.6px;color:#000;">.MPRESS2:050514A0 wso.exe:$4C514A0 #FAD2A0</div>
<div style="left:509px;top:101px;width:298px;height:19px;background:#e1e1e1;border:1px solid #adadad;"></div>
<div class="m" style="left:620px;top:106.6px;color:#000;">Masquer FPU</div>
<div style="left:508px;top:123px;width:286px;height:1px;background:#6e7888;"></div>
<div style="left:508px;top:123px;width:1px;height:166px;background:#828790;"></div>
<div style="left:509px;top:124px;width:284px;height:148px;background:#fff8f0;"></div>
<div style="left:793px;top:124px;width:16px;height:148px;background:#f0f0f0;"></div>
<div style="left:509px;top:272px;width:300px;height:17px;background:#f0f0f0;"></div>
<div class="m" style="left:516px;top:129.6px;color:#000;">EAX</div>
<div class="m" style="left:558px;top:129.6px;color:#000;">0019FFCC</div>
<div style="left:515.5px;top:138px;width:21.5px;height:2.2px;background:#a80a22;"></div>
<div class="m" style="left:516px;top:141.6px;color:#000;">EBX</div>
<div class="m" style="left:558px;top:141.6px;color:#000;">00228000</div>
<div class="m" style="left:516px;top:153.6px;color:#000;">ECX</div>
<div class="m" style="left:558px;top:153.6px;color:#000;">0505149F</div>
<div class="m" style="left:650px;top:153.6px;color:#000;">&lt;wso.EntryPoint&gt;</div>
<div style="left:515.5px;top:162px;width:21.5px;height:2.2px;background:#a80a22;"></div>
<div class="m" style="left:516px;top:165.6px;color:#000;">EDX</div>
<div class="m" style="left:558px;top:165.6px;color:#000;">0505149F</div>
<div class="m" style="left:650px;top:165.6px;color:#000;">&lt;wso.EntryPoint&gt;</div>
<div style="left:515.5px;top:174px;width:21.5px;height:2.2px;background:#a80a22;"></div>
<div class="m" style="left:516px;top:177.6px;color:#000;">EBP</div>
<div class="m" style="left:558px;top:177.6px;color:#000;">0019FF80</div>
<div class="m" style="left:516px;top:189.6px;color:#000;">ESP</div>
<div class="m" style="left:558px;top:189.6px;color:#ff0000;">0019FF54</div>
<div class="m" style="left:650px;top:189.6px;color:#000;">&lt;&amp;EntryPoint&gt;</div>
<div style="left:515.5px;top:198px;width:21.5px;height:2.2px;background:#5a4a08;"></div>
<div class="m" style="left:516px;top:201.6px;color:#000;">ESI</div>
<div class="m" style="left:558px;top:201.6px;color:#000;">0505149F</div>
<div class="m" style="left:650px;top:201.6px;color:#000;">&lt;wso.EntryPoint&gt;</div>
<div class="m" style="left:516px;top:213.6px;color:#000;">EDI</div>
<div class="m" style="left:558px;top:213.6px;color:#000;">0505149F</div>
<div class="m" style="left:650px;top:213.6px;color:#000;">&lt;wso.EntryPoint&gt;</div>
<div class="m" style="left:516px;top:237.6px;color:#000;">EIP</div>
<div class="m" style="left:558px;top:237.6px;color:#ff0000;">050514A0</div>
<div class="m" style="left:649px;top:237.6px;color:#000;">wso.050514A0</div>
<div class="m" style="left:516px;top:261.6px;color:#000;">EFLAGS</div>
<div class="m" style="left:579px;top:261.6px;color:#ff0000;">00000246</div>
<div style="left:509px;top:272px;width:300px;height:17px;background:#f0f0f0;"></div>
<svg style="left:795.9px;top:128.7px" width="11.2" height="7.6"><polyline points="2.00,5.60 5.60,2.00 9.20,5.60" fill="none" stroke="#505050" stroke-width="2"/></svg>
<svg style="left:795.9px;top:259.2px" width="11.2" height="7.6"><polyline points="2.00,2.00 5.60,5.60 9.20,2.00" fill="none" stroke="#505050" stroke-width="2"/></svg>
<div style="left:794.5px;top:140px;width:14px;height:17.7px;background:#c8c8c8;"></div>
<svg style="left:513.2px;top:273.9px" width="7.6" height="11.2"><polyline points="5.60,2.00 2.00,5.60 5.60,9.20" fill="none" stroke="#505050" stroke-width="2"/></svg>
<svg style="left:781.2px;top:273.9px" width="7.6" height="11.2"><polyline points="2.00,2.00 5.60,5.60 2.00,9.20" fill="none" stroke="#505050" stroke-width="2"/></svg>
<div style="left:525px;top:273px;width:71px;height:15px;background:#c8c8c8;"></div>
<div style="left:493px;top:187px;width:134px;height:16px;background:#f3d75f;mix-blend-mode:multiply"></div>
<div style="left:509px;top:290px;width:191px;height:16px;background:#e1e1e1;border:1px solid #adadad;"></div>
<div class="s" style="left:512px;top:292.99px;font-size:11px;line-height:15px;letter-spacing:-0.042px;color:#000;">Valeur par défaut (stdcall)</div>
<svg style="left:690px;top:297px" width="7.6" height="4" viewBox="0 0 7.6 4"><polygon points="0,0 7.6,0 3.8,4" fill="#000"/></svg>
<div style="left:705px;top:290px;width:34px;height:16px;background:#fff;border:1px solid #adadad;"></div>
<div class="s" style="left:709.3px;top:292.69px;font-size:11px;line-height:15px;letter-spacing:-0.200px;color:#000;">5</div>
<div style="left:725px;top:291px;width:13px;height:6px;background:#f0f0f0;border:1px solid #c8c8c8;"></div>
<div style="left:725px;top:299px;width:13px;height:6px;background:#f0f0f0;border:1px solid #c8c8c8;"></div>
<svg style="left:729px;top:293.5px" width="6" height="11" viewBox="0 0 6 11"><polygon points="3,0 6,3.4 0,3.4" fill="#000"/><polygon points="0,7.4 6,7.4 3,10.8" fill="#000"/></svg>
<div style="left:744px;top:292px;width:11px;height:11px;background:#fff;border:1px solid #333;"></div>
<div class="s" style="left:761.5px;top:292.69px;font-size:11px;line-height:15px;letter-spacing:-0.324px;color:#000;">Débloqué</div>
<div style="left:508px;top:309px;width:302px;height:71px;background:#828790;"></div>
<div style="left:509px;top:310px;width:283px;height:52px;background:#fff8f0;"></div>
<div style="left:792px;top:310px;width:17px;height:52px;background:#f0f0f0;"></div>
<div style="left:509px;top:362px;width:300px;height:17px;background:#f0f0f0;"></div>
<div style="left:509px;top:310px;width:283px;height:11px;background:#c0c0c0;"></div>
<div class="m" style="left:513px;top:310.6px;color:#000;">1: [esp] 0505149F &lt;wso.EntryPoint&gt;</div>
<div class="m" style="left:513px;top:321.6px;color:#000;">2: [esp+4] 0505149F &lt;wso.EntryPoint&gt;</div>
<div class="m" style="left:513px;top:332.6px;color:#000;">3: [esp+8] 0019FF80</div>
<div class="m" style="left:513px;top:343.6px;color:#000;">4: [esp+C] 0019FF74</div>
<div class="m" style="left:513px;top:354.6px;color:#000;">5: [esp+10] 00228000</div>
<div style="left:509px;top:362px;width:300px;height:17px;background:#f0f0f0;"></div>
<svg style="left:794.9px;top:315.2px" width="11.2" height="7.6"><polyline points="2.00,5.60 5.60,2.00 9.20,5.60" fill="none" stroke="#505050" stroke-width="2"/></svg>
<svg style="left:794.9px;top:349.7px" width="11.2" height="7.6"><polyline points="2.00,2.00 5.60,5.60 9.20,2.00" fill="none" stroke="#505050" stroke-width="2"/></svg>
<div style="left:793.5px;top:327px;width:15px;height:17.6px;background:#c8c8c8;"></div>
<svg style="left:513.2px;top:364.9px" width="7.6" height="11.2"><polyline points="5.60,2.00 2.00,5.60 5.60,9.20" fill="none" stroke="#505050" stroke-width="2"/></svg>
<svg style="left:780.2px;top:364.9px" width="7.6" height="11.2"><polyline points="2.00,2.00 5.60,5.60 2.00,9.20" fill="none" stroke="#505050" stroke-width="2"/></svg>
<div style="left:525px;top:363px;width:125px;height:15px;background:#c8c8c8;"></div>
<div style="left:102px;top:383px;width:98px;height:22px;background:#f0f0f0;"></div>
<div style="left:102px;top:383px;width:98px;height:1px;background:#d9d9d9;"></div>
<div style="left:199px;top:383px;width:1px;height:22px;background:#d9d9d9;"></div>
<div class="s" style="left:131.75px;top:387.69px;font-size:11px;line-height:15px;letter-spacing:-0.258px;color:#000;">Vue Hexa 2</div>
<div style="left:200px;top:383px;width:99px;height:22px;background:#f0f0f0;"></div>
<div style="left:200px;top:383px;width:99px;height:1px;background:#d9d9d9;"></div>
<div style="left:298px;top:383px;width:1px;height:22px;background:#d9d9d9;"></div>
<div class="s" style="left:230.5px;top:387.69px;font-size:11px;line-height:15px;letter-spacing:-0.258px;color:#000;">Vue Hexa 3</div>
<div style="left:299px;top:383px;width:99px;height:22px;background:#f0f0f0;"></div>
<div style="left:299px;top:383px;width:99px;height:1px;background:#d9d9d9;"></div>
<div style="left:397px;top:383px;width:1px;height:22px;background:#d9d9d9;"></div>
<div class="s" style="left:329.5px;top:387.69px;font-size:11px;line-height:15px;letter-spacing:-0.258px;color:#000;">Vue Hexa 4</div>
<div style="left:398px;top:383px;width:99px;height:22px;background:#f0f0f0;"></div>
<div style="left:398px;top:383px;width:99px;height:1px;background:#d9d9d9;"></div>
<div style="left:496px;top:383px;width:1px;height:22px;background:#d9d9d9;"></div>
<div class="s" style="left:428.5px;top:387.69px;font-size:11px;line-height:15px;letter-spacing:-0.258px;color:#000;">Vue Hexa 5</div>
<div style="left:1.5px;top:380.5px;width:100px;height:24.5px;background:#fff;"></div>
<div style="left:101px;top:381px;width:1px;height:24px;background:#e2e2e2;"></div>
<div class="s" style="left:33px;top:386.39px;font-size:11px;line-height:15px;letter-spacing:-0.258px;color:#000;">Vue Hexa 1</div>
<svg style="left:13px;top:386px" width="17" height="13" viewBox="0 0 17 13"><rect x="0.5" y="2.5" width="4.6" height="7.5" rx="1" fill="#f0b429" stroke="#a8781a" stroke-width="0.7"/><rect x="1.2" y="3.8" width="2.6" height="2.8" fill="#4a78c8"/><rect x="5.4" y="0.5" width="11" height="9.8" rx="1" fill="#dfe3e8" stroke="#8e959d" stroke-width="0.8"/><g stroke="#aab1ba" stroke-width="0.8"><path d="M8,1 V10 M10.8,1 V10 M13.6,1 V10"/></g><circle cx="3.6" cy="11" r="1.6" fill="#333"/><circle cx="13" cy="11" r="1.6" fill="#333"/></svg>
<svg style="left:112px;top:386px" width="17" height="13" viewBox="0 0 17 13"><rect x="0.5" y="2.5" width="4.6" height="7.5" rx="1" fill="#f0b429" stroke="#a8781a" stroke-width="0.7"/><rect x="1.2" y="3.8" width="2.6" height="2.8" fill="#4a78c8"/><rect x="5.4" y="0.5" width="11" height="9.8" rx="1" fill="#dfe3e8" stroke="#8e959d" stroke-width="0.8"/><g stroke="#aab1ba" stroke-width="0.8"><path d="M8,1 V10 M10.8,1 V10 M13.6,1 V10"/></g><circle cx="3.6" cy="11" r="1.6" fill="#333"/><circle cx="13" cy="11" r="1.6" fill="#333"/></svg>
<svg style="left:211px;top:386px" width="17" height="13" viewBox="0 0 17 13"><rect x="0.5" y="2.5" width="4.6" height="7.5" rx="1" fill="#f0b429" stroke="#a8781a" stroke-width="0.7"/><rect x="1.2" y="3.8" width="2.6" height="2.8" fill="#4a78c8"/><rect x="5.4" y="0.5" width="11" height="9.8" rx="1" fill="#dfe3e8" stroke="#8e959d" stroke-width="0.8"/><g stroke="#aab1ba" stroke-width="0.8"><path d="M8,1 V10 M10.8,1 V10 M13.6,1 V10"/></g><circle cx="3.6" cy="11" r="1.6" fill="#333"/><circle cx="13" cy="11" r="1.6" fill="#333"/></svg>
<svg style="left:310px;top:386px" width="17" height="13" viewBox="0 0 17 13"><rect x="0.5" y="2.5" width="4.6" height="7.5" rx="1" fill="#f0b429" stroke="#a8781a" stroke-width="0.7"/><rect x="1.2" y="3.8" width="2.6" height="2.8" fill="#4a78c8"/><rect x="5.4" y="0.5" width="11" height="9.8" rx="1" fill="#dfe3e8" stroke="#8e959d" stroke-width="0.8"/><g stroke="#aab1ba" stroke-width="0.8"><path d="M8,1 V10 M10.8,1 V10 M13.6,1 V10"/></g><circle cx="3.6" cy="11" r="1.6" fill="#333"/><circle cx="13" cy="11" r="1.6" fill="#333"/></svg>
<svg style="left:409px;top:386px" width="17" height="13" viewBox="0 0 17 13"><rect x="0.5" y="2.5" width="4.6" height="7.5" rx="1" fill="#f0b429" stroke="#a8781a" stroke-width="0.7"/><rect x="1.2" y="3.8" width="2.6" height="2.8" fill="#4a78c8"/><rect x="5.4" y="0.5" width="11" height="9.8" rx="1" fill="#dfe3e8" stroke="#8e959d" stroke-width="0.8"/><g stroke="#aab1ba" stroke-width="0.8"><path d="M8,1 V10 M10.8,1 V10 M13.6,1 V10"/></g><circle cx="3.6" cy="11" r="1.6" fill="#333"/><circle cx="13" cy="11" r="1.6" fill="#333"/></svg>
<div style="left:459px;top:381px;width:32px;height:24px;background:#f0f0f0;"></div>
<div style="left:460.6px;top:382.7px;width:12px;height:18px;background:#f0f0f0;border:1px solid #a6a6a6;border-radius:2.5px"></div>
<div style="left:474.6px;top:382.7px;width:12px;height:18px;background:#f0f0f0;border:1px solid #a6a6a6;border-radius:2.5px"></div>
<svg style="left:464.6px;top:387.7px" width="5.5" height="9" viewBox="0 0 5.5 9"><polygon points="5.5,0 0,4.5 5.5,9" fill="#a6a6a6"/></svg>
<svg style="left:478.9px;top:387.2px" width="5.5" height="9.4" viewBox="0 0 5.5 9.4"><polygon points="0,0 5.5,4.7 0,9.4" fill="#000"/></svg>
<div style="left:1.4px;top:404.6px;width:489.6px;height:120.8px;background:#000;"></div>
<div style="left:3px;top:406px;width:486px;height:1px;background:#696969;"></div>
<div style="left:3px;top:407px;width:469px;height:100px;background:#fff8f0;"></div>
<div style="left:472px;top:407px;width:17px;height:100px;background:#f0f0f0;"></div>
<div style="left:3px;top:507px;width:486px;height:16px;background:#f0f0f0;"></div>
<div style="left:3px;top:523px;width:486px;height:1px;background:#fff;"></div>
<div style="left:3px;top:407px;width:469px;height:13px;background:#c0c0c0;"></div>
<div style="left:65px;top:407px;width:1px;height:13px;background:#808080;"></div>
<div style="left:66px;top:407px;width:1px;height:13px;background:#e8e8e8;"></div>
<div style="left:402px;top:407px;width:1px;height:13px;background:#808080;"></div>
<div style="left:403px;top:407px;width:1px;height:13px;background:#e8e8e8;"></div>
<div style="left:3px;top:419px;width:469px;height:1px;background:#a0a0a0;"></div>
<div class="m" style="left:6px;top:409.1px;color:#000;">Addresse</div>
<div class="m" style="left:70px;top:409.1px;color:#000;">Hexa</div>
<div class="m" style="left:407px;top:409.1px;color:#000;">ASCII</div>
<div style="left:66px;top:421px;width:84px;height:11px;background:#c0c0c0;"></div>
<div style="left:407px;top:421px;width:28px;height:11px;background:#c0c0c0;"></div>
<div style="left:150px;top:421px;width:1px;height:90px;background:#808080;"></div>
<div style="left:234px;top:421px;width:1px;height:90px;background:#808080;"></div>
<div style="left:318px;top:421px;width:1px;height:90px;background:#808080;"></div>
<div style="left:402px;top:421px;width:1px;height:90px;background:#808080;"></div>
<div style="left:65px;top:421px;width:1px;height:90px;background:#808080;"></div>
<div class="m" style="left:5px;top:421.6px;color:#ff0000;">0505149F</div>
<div class="m" style="left:70px;top:421.6px;color:#000;"><span style="color:#800080;">60</span> <span style="color:#000;">E8</span> <span style="color:#008000;">00</span> <span style="color:#008000;">00</span> <span style="color:#008000;">00</span> <span style="color:#008000;">00</span> <span style="color:#800080;">58</span> <span style="color:#000;">05</span> <span style="color:#800080;">5A</span> <span style="color:#000;">0B</span> <span style="color:#008000;">00</span> <span style="color:#008000;">00</span> <span style="color:#000;">8B</span> <span style="color:#800080;">30</span> <span style="color:#000;">03</span> <span style="color:#000;">F0</span></div>
<div class="m" style="left:407px;top:421.6px;color:#000;"><span style="color:#800080;">`</span><span style="color:#000;">è</span><span style="color:#008000;">.</span><span style="color:#008000;">.</span><span style="color:#008000;">.</span><span style="color:#008000;">.</span><span style="color:#800080;">X</span><span style="color:#000;">.</span><span style="color:#800080;">Z</span><span style="color:#000;">.</span><span style="color:#008000;">.</span><span style="color:#008000;">.</span><span style="color:#000;">.</span><span style="color:#800080;">0</span><span style="color:#000;">.</span><span style="color:#000;">ð</span></div>
<div class="m" style="left:5px;top:432.6px;color:#000;">050514AF</div>
<div class="m" style="left:70px;top:432.6px;color:#000;"><span style="color:#800080;">2B</span> <span style="color:#000;">C0</span> <span style="color:#000;">8B</span> <span style="color:#000;">FE</span> <span style="color:#800080;">66</span> <span style="color:#000;">AD</span> <span style="color:#000;">C1</span> <span style="color:#000;">E0</span> <span style="color:#000;">0C</span> <span style="color:#000;">8B</span> <span style="color:#000;">C8</span> <span style="color:#800080;">50</span> <span style="color:#000;">AD</span> <span style="color:#800080;">2B</span> <span style="color:#000;">C8</span> <span style="color:#000;">03</span></div>
<div class="m" style="left:407px;top:432.6px;color:#000;"><span style="color:#800080;">+</span><span style="color:#000;">À</span><span style="color:#000;">.</span><span style="color:#000;">þ</span><span style="color:#800080;">f</span><span style="color:#000;">.</span><span style="color:#000;">Á</span><span style="color:#000;">à</span><span style="color:#000;">.</span><span style="color:#000;">.</span><span style="color:#000;">È</span><span style="color:#800080;">P</span><span style="color:#000;">.</span><span style="color:#800080;">+</span><span style="color:#000;">È</span><span style="color:#000;">.</span></div>
<div class="m" style="left:5px;top:443.6px;color:#000;">050514BF</div>
<div class="m" style="left:70px;top:443.6px;color:#000;"><span style="color:#000;">F1</span> <span style="color:#000;">8B</span> <span style="color:#000;">C8</span> <span style="color:#800080;">57</span> <span style="color:#800080;">51</span> <span style="color:#800080;">49</span> <span style="color:#000;">8A</span> <span style="color:#800080;">44</span> <span style="color:#800080;">39</span> <span style="color:#000;">06</span> <span style="color:#800080;">74</span> <span style="color:#000;">05</span> <span style="color:#000;">88</span> <span style="color:#000;">04</span> <span style="color:#800080;">31</span> <span style="color:#000;">EB</span></div>
<div class="m" style="left:407px;top:443.6px;color:#000;"><span style="color:#000;">ñ</span><span style="color:#000;">.</span><span style="color:#000;">È</span><span style="color:#800080;">W</span><span style="color:#800080;">Q</span><span style="color:#800080;">I</span><span style="color:#000;">.</span><span style="color:#800080;">D</span><span style="color:#800080;">9</span><span style="color:#000;">.</span><span style="color:#800080;">t</span><span style="color:#000;">.</span><span style="color:#000;">.</span><span style="color:#000;">.</span><span style="color:#800080;">1</span><span style="color:#000;">ë</span></div>
<div class="m" style="left:5px;top:454.6px;color:#000;">050514CF</div>
<div class="m" style="left:70px;top:454.6px;color:#000;"><span style="color:#000;">C0</span> <span style="color:#000;">AC</span> <span style="color:#000;">8B</span> <span style="color:#000;">C8</span> <span style="color:#000;">0C</span> <span style="color:#000;">E1</span> <span style="color:#000;">F0</span> <span style="color:#800080;">24</span> <span style="color:#000;">0F</span> <span style="color:#000;">C2</span> <span style="color:#800080;">3C</span> <span style="color:#000;">0C</span> <span style="color:#800080;">75</span> <span style="color:#000;">03</span> <span style="color:#000;">AD</span> <span style="color:#000;">8B</span></div>
<div class="m" style="left:407px;top:454.6px;color:#000;"><span style="color:#000;">À</span><span style="color:#000;">¬</span><span style="color:#000;">.</span><span style="color:#000;">È</span><span style="color:#000;">.</span><span style="color:#000;">á</span><span style="color:#000;">ð</span><span style="color:#800080;">$</span><span style="color:#000;">.</span><span style="color:#000;">Â</span><span style="color:#800080;">&lt;</span><span style="color:#000;">.</span><span style="color:#800080;">u</span><span style="color:#000;">.</span><span style="color:#000;">.</span><span style="color:#000;">.</span></div>
<div class="m" style="left:5px;top:465.6px;color:#000;">050514DF</div>
<div class="m" style="left:70px;top:465.6px;color:#000;"><span style="color:#000;">C8</span> <span style="color:#800080;">51</span> <span style="color:#000;">02</span> <span style="color:#000;">CD</span> <span style="color:#000;">BD</span> <span style="color:#008000;">00</span> <span style="color:#000;">FD</span> <span style="color:#000;">FF</span> <span style="color:#000;">FF</span> <span style="color:#800080;">28</span> <span style="color:#000;">1B</span> <span style="color:#000;">C0</span> <span style="color:#000;">0B</span> <span style="color:#000;">C9</span> <span style="color:#800080;">74</span> <span style="color:#000;">1A</span></div>
<div class="m" style="left:407px;top:465.6px;color:#000;"><span style="color:#000;">È</span><span style="color:#800080;">Q</span><span style="color:#000;">.</span><span style="color:#000;">Í</span><span style="color:#000;">½</span><span style="color:#008000;">.</span><span style="color:#000;">ý</span><span style="color:#000;">ÿ</span><span style="color:#000;">ÿ</span><span style="color:#800080;">(</span><span style="color:#000;">.</span><span style="color:#000;">À</span><span style="color:#000;">.</span><span style="color:#000;">É</span><span style="color:#800080;">t</span><span style="color:#000;">.</span></div>
<div class="m" style="left:5px;top:476.6px;color:#000;">050514EF</div>
<div class="m" style="left:70px;top:476.6px;color:#000;"><span style="color:#000;">A4</span> <span style="color:#800080;">6C</span> <span style="color:#000;">90</span> <span style="color:#000;">F1</span> <span style="color:#000;">FF</span> <span style="color:#000;">FF</span> <span style="color:#800080;">51</span> <span style="color:#800080;">2B</span> <span style="color:#000;">C9</span> <span style="color:#800080;">28</span> <span style="color:#000;">03</span> <span style="color:#000;">F8</span> <span style="color:#000;">8B</span> <span style="color:#000;">D6</span> <span style="color:#800080;">2B</span> <span style="color:#000;">D7</span></div>
<div class="m" style="left:407px;top:476.6px;color:#000;"><span style="color:#000;">¤</span><span style="color:#800080;">l</span><span style="color:#000;">.</span><span style="color:#000;">ñ</span><span style="color:#000;">ÿ</span><span style="color:#000;">ÿ</span><span style="color:#800080;">Q</span><span style="color:#800080;">+</span><span style="color:#000;">É</span><span style="color:#800080;">(</span><span style="color:#000;">.</span><span style="color:#000;">ø</span><span style="color:#000;">.</span><span style="color:#000;">Ö</span><span style="color:#800080;">+</span><span style="color:#000;">×</span></div>
<div class="m" style="left:5px;top:487.6px;color:#000;">050514FF</div>
<div class="m" style="left:70px;top:487.6px;color:#000;"><span style="color:#000;">17</span> <span style="color:#000;">C1</span> <span style="color:#000;">E2</span> <span style="color:#000;">0C</span> <span style="color:#800080;">52</span> <span style="color:#800080;">57</span> <span style="color:#000;">0C</span> <span style="color:#000;">C0</span> <span style="color:#000;">0C</span> <span style="color:#800080;">28</span> <span style="color:#800080;">5B</span> <span style="color:#800080;">5F</span> <span style="color:#800080;">5A</span> <span style="color:#000;">03</span> <span style="color:#000;">F9</span> <span style="color:#000;">8B</span></div>
<div class="m" style="left:407px;top:487.6px;color:#000;"><span style="color:#000;">.</span><span style="color:#000;">Á</span><span style="color:#000;">â</span><span style="color:#000;">.</span><span style="color:#800080;">R</span><span style="color:#800080;">W</span><span style="color:#000;">.</span><span style="color:#000;">À</span><span style="color:#000;">.</span><span style="color:#800080;">(</span><span style="color:#800080;">[</span><span style="color:#800080;">_</span><span style="color:#800080;">Z</span><span style="color:#000;">.</span><span style="color:#000;">ù</span><span style="color:#000;">.</span></div>
<div class="m" style="left:5px;top:498.6px;color:#000;">0505150F</div>
<div class="m" style="left:70px;top:498.6px;color:#000;"><span style="color:#000;">E8</span> <span style="color:#800080;">5E</span> <span style="color:#008000;">00</span> <span style="color:#008000;">00</span> <span style="color:#008000;">00</span> <span style="color:#000;">10</span> <span style="color:#000;">E4</span> <span style="color:#800080;">5E</span> <span style="color:#800080;">5A</span> <span style="color:#800080;">2D</span> <span style="color:#008000;">00</span> <span style="color:#000;">10</span> <span style="color:#008000;">00</span> <span style="color:#008000;">00</span> <span style="color:#000;">8B</span> <span style="color:#000;">F2</span></div>
<div class="m" style="left:407px;top:498.6px;color:#000;"><span style="color:#000;">è</span><span style="color:#800080;">^</span><span style="color:#008000;">.</span><span style="color:#008000;">.</span><span style="color:#008000;">.</span><span style="color:#000;">.</span><span style="color:#000;">ä</span><span style="color:#800080;">^</span><span style="color:#800080;">Z</span><span style="color:#800080;">-</span><span style="color:#008000;">.</span><span style="color:#000;">.</span><span style="color:#008000;">.</span><span style="color:#008000;">.</span><span style="color:#000;">.</span><span style="color:#000;">ò</span></div>
<div style="left:472px;top:407px;width:17px;height:100px;background:#f0f0f0;"></div>
<div style="left:3px;top:507px;width:486px;height:16px;background:#f0f0f0;"></div>
<svg style="left:474.9px;top:411.2px" width="11.2" height="7.6"><polyline points="2.00,5.60 5.60,2.00 9.20,5.60" fill="none" stroke="#505050" stroke-width="2"/></svg>
<svg style="left:474.9px;top:494.2px" width="11.2" height="7.6"><polyline points="2.00,2.00 5.60,5.60 9.20,2.00" fill="none" stroke="#505050" stroke-width="2"/></svg>
<div style="left:473px;top:430px;width:15px;height:18px;background:#c8c8c8;"></div>
<svg style="left:7.2px;top:509.4px" width="7.6" height="11.2"><polyline points="5.60,2.00 2.00,5.60 5.60,9.20" fill="none" stroke="#505050" stroke-width="2"/></svg>
<svg style="left:459.2px;top:509.4px" width="7.6" height="11.2"><polyline points="2.00,2.00 5.60,5.60 2.00,9.20" fill="none" stroke="#505050" stroke-width="2"/></svg>
<div style="left:20px;top:508px;width:320px;height:15px;background:#c8c8c8;"></div>
<div style="left:491px;top:381px;width:319px;height:144px;background:#828790;"></div>
<div style="left:492px;top:382px;width:300px;height:125px;background:#fff8f0;"></div>
<div style="left:792px;top:382px;width:17px;height:125px;background:#f0f0f0;"></div>
<div style="left:492px;top:507px;width:317px;height:17px;background:#f0f0f0;"></div>
<div style="left:492px;top:382px;width:300px;height:11px;background:#c0c0c0;"></div>
<div style="left:555px;top:382px;width:1px;height:125px;background:#808080;"></div>
<div style="left:621px;top:382px;width:1px;height:125px;background:#808080;"></div>
<div style="left:492px;top:382px;width:63px;height:11px;background:#000;"></div>
<div class="m" style="left:496.5px;top:382.6px;color:#fff;">0019FF54</div>
<div class="m" style="left:560px;top:382.6px;color:#000;">0505149F</div>
<div class="m" style="left:626px;top:382.6px;color:#000;width:166px;overflow:hidden">wso.EntryPoint</div>
<div class="m" style="left:496.5px;top:393.6px;color:#ff0000;">0019FF58</div>
<div class="m" style="left:560px;top:393.6px;color:#000;">0505149F</div>
<div class="m" style="left:626px;top:393.6px;color:#000;width:166px;overflow:hidden">wso.EntryPoint</div>
<div class="m" style="left:496.5px;top:404.6px;color:#808080;">0019FF5C</div>
<div class="m" style="left:560px;top:404.6px;color:#000;">0019FF80</div>
<div class="m" style="left:496.5px;top:415.6px;color:#808080;">0019FF60</div>
<div class="m" style="left:560px;top:415.6px;color:#000;">0019FF74</div>
<div class="m" style="left:496.5px;top:426.6px;color:#808080;">0019FF64</div>
<div class="m" style="left:560px;top:426.6px;color:#000;">00228000</div>
<div class="m" style="left:496.5px;top:437.6px;color:#ff0000;">0019FF68</div>
<div class="m" style="left:560px;top:437.6px;color:#000;">0505149F</div>
<div class="m" style="left:626px;top:437.6px;color:#000;width:166px;overflow:hidden">wso.EntryPoint</div>
<div class="m" style="left:496.5px;top:448.6px;color:#ff0000;">0019FF6C</div>
<div class="m" style="left:560px;top:448.6px;color:#000;">0505149F</div>
<div class="m" style="left:626px;top:448.6px;color:#000;width:166px;overflow:hidden">wso.EntryPoint</div>
<div class="m" style="left:496.5px;top:459.6px;color:#808080;">0019FF70</div>
<div class="m" style="left:560px;top:459.6px;color:#000;">0019FFCC</div>
<div class="m" style="left:496.5px;top:470.6px;color:#808080;">0019FF74</div>
<div class="m" style="left:560px;top:470.6px;color:#000;">770CFCC9</div>
<div class="m" style="left:626px;top:470.6px;color:#ff0000;width:166px;overflow:hidden">return to kernel32.770CFCC9 from ???</div>
<div class="m" style="left:496.5px;top:481.6px;color:#808080;">0019FF78</div>
<div class="m" style="left:560px;top:481.6px;color:#000;">00228000</div>
<div class="m" style="left:496.5px;top:492.6px;color:#ff0000;">0019FF7C</div>
<div class="m" style="left:560px;top:492.6px;color:#000;">770CFCB0</div>
<div class="m" style="left:626px;top:492.6px;color:#000;width:166px;overflow:hidden">kernel32.770CFCB0</div>
<div class="m" style="left:496.5px;top:503.6px;color:#808080;">0019FF80</div>
<div class="m" style="left:560px;top:503.6px;color:#000;">0019FFDC</div>
<div style="left:792px;top:382px;width:17px;height:125px;background:#f0f0f0;"></div>
<div style="left:492px;top:507px;width:317px;height:17px;background:#f0f0f0;"></div>
<svg style="left:794.9px;top:387.2px" width="11.2" height="7.6"><polyline points="2.00,5.60 5.60,2.00 9.20,5.60" fill="none" stroke="#505050" stroke-width="2"/></svg>
<svg style="left:794.9px;top:494.2px" width="11.2" height="7.6"><polyline points="2.00,2.00 5.60,5.60 9.20,2.00" fill="none" stroke="#505050" stroke-width="2"/></svg>
<div style="left:793.5px;top:471px;width:15px;height:18px;background:#c8c8c8;"></div>
<svg style="left:496.2px;top:509.9px" width="7.6" height="11.2"><polyline points="5.60,2.00 2.00,5.60 5.60,9.20" fill="none" stroke="#505050" stroke-width="2"/></svg>
<svg style="left:780.2px;top:509.9px" width="7.6" height="11.2"><polyline points="2.00,2.00 5.60,5.60 2.00,9.20" fill="none" stroke="#505050" stroke-width="2"/></svg>
<div style="left:509px;top:508px;width:68px;height:15px;background:#c8c8c8;"></div>
<div class="s" style="left:3px;top:531.09px;font-size:11px;line-height:15px;letter-spacing:-0.491px;color:#000;">Commande:</div>
<div style="left:63px;top:527px;width:670px;height:18px;background:#fff;border:1px solid #7a7a7a;"></div>
<div style="left:736px;top:527px;width:71px;height:18px;background:#e1e1e1;border:1px solid #adadad;"></div>
<div class="s" style="left:738px;top:531.09px;font-size:11px;line-height:15px;letter-spacing:0.163px;color:#000;">Default</div>
<svg style="left:794px;top:535.2px" width="7.6" height="4" viewBox="0 0 7.6 4"><polygon points="0,0 7.6,0 3.8,4" fill="#000"/></svg>
<div style="left:1px;top:549px;width:809px;height:23px;background:#c2c2c2;"></div>
<div style="left:3px;top:552px;width:62px;height:16px;background:#ffff00;border-top:1px solid #868686;border-left:1px solid #868686;border-bottom:1px solid #dedede;border-right:1px solid #dedede"></div>
<div class="s" style="left:16.5px;top:554.09px;font-size:11px;line-height:15px;letter-spacing:-0.385px;color:#ff0000;">Paused</div>
<div style="left:73px;top:552px;width:540px;height:16px;background:#c6c6c6;border-top:1px solid #868686;border-left:1px solid #868686;border-bottom:1px solid #dedede;border-right:1px solid #dedede"></div>
<div class="s" style="left:76.6px;top:554.29px;font-size:11px;line-height:15px;letter-spacing:0.050px;color:#000;">wso.exe: 0505149F -&gt; 0505149F (0x00000001 bytes)</div>
<div style="left:621px;top:552px;width:186px;height:16px;background:#c6c6c6;border-top:1px solid #868686;border-left:1px solid #868686;border-bottom:1px solid #dedede;border-right:1px solid #dedede"></div>
<div class="s" style="left:624.5px;top:554.29px;font-size:11px;line-height:15px;letter-spacing:0.056px;color:#000;">Temps perdu à déboguer: 2:11:26:19</div>
<div style="left:148px;top:430px;width:278px;height:431px;background:#f2f2f2;border:1px solid #cccccc;box-shadow:2px 2px 3px rgba(0,0,0,0.45)"></div>
<div class="s" style="left:182.5px;top:437.99px;font-size:11px;line-height:15px;letter-spacing:-0.321px;color:#000;">Binaire</div>
<svg style="left:409px;top:439.5px" width="4" height="7" viewBox="0 0 4 7"><polygon points="0,0 4,3.5 0,7" fill="#000"/></svg>
<div class="s" style="left:182.5px;top:459.99px;font-size:11px;line-height:15px;letter-spacing:-0.401px;color:#000;">Copier</div>
<svg style="left:409px;top:461.5px" width="4" height="7" viewBox="0 0 4 7"><polygon points="0,0 4,3.5 0,7" fill="#000"/></svg>
<div class="s" style="left:182.5px;top:481.99px;font-size:11px;line-height:15px;letter-spacing:-0.257px;color:#000;">Suivre dans le Désassembleur</div>
<div class="s" style="left:182.5px;top:503.99px;font-size:11px;line-height:15px;letter-spacing:-0.165px;color:#000;">Suivre dans la cartographie mémoire</div>
<div class="s" style="left:182.5px;top:525.99px;font-size:11px;line-height:15px;letter-spacing:-0.082px;color:#000;">Étiqueter l'Adresse Courante</div>
<div class="s" style="left:376.8px;top:525.99px;font-size:11px;line-height:15px;letter-spacing:-0.200px;color:#000;">:</div>
<div class="s" style="left:182.5px;top:547.99px;font-size:11px;line-height:15px;letter-spacing:-0.327px;color:#000;">Watch DWORD</div>
<div class="s" style="left:182.5px;top:569.99px;font-size:11px;line-height:15px;letter-spacing:-0.076px;color:#000;">Modifier valeur</div>
<div class="s" style="left:376.8px;top:569.99px;font-size:11px;line-height:15px;letter-spacing:-0.541px;color:#000;">Space</div>
<div style="left:151px;top:587px;width:271px;height:22px;background:#91c9f7;"></div>
<div class="s" style="left:182.5px;top:591.99px;font-size:11px;line-height:15px;letter-spacing:0.002px;color:#000;">Point d'arrêt</div>
<svg style="left:409px;top:593.5px" width="4" height="7" viewBox="0 0 4 7"><polygon points="0,0 4,3.5 0,7" fill="#000"/></svg>
<div class="s" style="left:182.5px;top:613.99px;font-size:11px;line-height:15px;letter-spacing:0.036px;color:#000;">Rechercher un Motif...</div>
<div class="s" style="left:376.8px;top:613.99px;font-size:11px;line-height:15px;letter-spacing:-0.096px;color:#000;">Ctrl+B</div>
<div class="s" style="left:182.5px;top:635.99px;font-size:11px;line-height:15px;letter-spacing:-0.135px;color:#000;">Chercher Références</div>
<div class="s" style="left:376.8px;top:635.99px;font-size:11px;line-height:15px;letter-spacing:-0.164px;color:#000;">Ctrl+R</div>
<div class="s" style="left:182.5px;top:657.99px;font-size:11px;line-height:15px;letter-spacing:-0.130px;color:#000;">Synchroniser avec une expression</div>
<div class="s" style="left:182.5px;top:679.99px;font-size:11px;line-height:15px;letter-spacing:-0.238px;color:#000;">Allouer de la mémoire</div>
<div class="s" style="left:182.5px;top:701.99px;font-size:11px;line-height:15px;letter-spacing:-0.170px;color:#000;">Aller à</div>
<svg style="left:409px;top:703.5px" width="4" height="7" viewBox="0 0 4 7"><polygon points="0,0 4,3.5 0,7" fill="#000"/></svg>
<div style="left:178px;top:723px;width:249px;height:1px;background:#d7d7d7;"></div>
<div class="s" style="left:182.5px;top:732.99px;font-size:11px;line-height:15px;letter-spacing:-0.172px;color:#000;">Hexa</div>
<svg style="left:409px;top:734.5px" width="4" height="7" viewBox="0 0 4 7"><polygon points="0,0 4,3.5 0,7" fill="#000"/></svg>
<div class="s" style="left:182.5px;top:754.99px;font-size:11px;line-height:15px;letter-spacing:0.341px;color:#000;">Texte</div>
<svg style="left:409px;top:756.5px" width="4" height="7" viewBox="0 0 4 7"><polygon points="0,0 4,3.5 0,7" fill="#000"/></svg>
<div class="s" style="left:182.5px;top:776.99px;font-size:11px;line-height:15px;letter-spacing:-0.125px;color:#000;">Entier</div>
<svg style="left:409px;top:778.5px" width="4" height="7" viewBox="0 0 4 7"><polygon points="0,0 4,3.5 0,7" fill="#000"/></svg>
<div class="s" style="left:182.5px;top:798.99px;font-size:11px;line-height:15px;letter-spacing:-0.094px;color:#000;">Float</div>
<svg style="left:409px;top:800.5px" width="4" height="7" viewBox="0 0 4 7"><polygon points="0,0 4,3.5 0,7" fill="#000"/></svg>
<div class="s" style="left:182.5px;top:820.99px;font-size:11px;line-height:15px;letter-spacing:-0.194px;color:#000;">Adresse</div>
<div class="s" style="left:182.5px;top:842.99px;font-size:11px;line-height:15px;letter-spacing:-0.332px;color:#000;">Vue Désassembleur</div>
<div style="left:421px;top:587px;width:178px;height:167px;background:#f2f2f2;border:1px solid #cccccc;box-shadow:2px 2px 3px rgba(0,0,0,0.45)"></div>
<div style="left:424px;top:589px;width:173px;height:22px;background:#91c9f7;"></div>
<div class="s" style="left:455px;top:594.19px;font-size:11px;line-height:15px;letter-spacing:-0.106px;color:#000;">Matériel, Accès</div>
<svg style="left:582px;top:595.5px" width="4" height="7" viewBox="0 0 4 7"><polygon points="0,0 4,3.5 0,7" fill="#000"/></svg>
<div class="s" style="left:455px;top:616.19px;font-size:11px;line-height:15px;letter-spacing:-0.063px;color:#000;">Matériel, Écriture</div>
<svg style="left:582px;top:617.5px" width="4" height="7" viewBox="0 0 4 7"><polygon points="0,0 4,3.5 0,7" fill="#000"/></svg>
<div class="s" style="left:455px;top:638.19px;font-size:11px;line-height:15px;letter-spacing:-0.055px;color:#000;">Matériel, Exécution</div>
<div style="left:450px;top:660px;width:146px;height:1px;background:#d7d7d7;"></div>
<div class="s" style="left:455px;top:669.19px;font-size:11px;line-height:15px;letter-spacing:-0.232px;color:#000;">Mémoire, Accès</div>
<svg style="left:582px;top:670.5px" width="4" height="7" viewBox="0 0 4 7"><polygon points="0,0 4,3.5 0,7" fill="#000"/></svg>
<div class="s" style="left:455px;top:691.19px;font-size:11px;line-height:15px;letter-spacing:-0.162px;color:#000;">Mémoire, Lecture</div>
<svg style="left:582px;top:692.5px" width="4" height="7" viewBox="0 0 4 7"><polygon points="0,0 4,3.5 0,7" fill="#000"/></svg>
<div class="s" style="left:455px;top:713.19px;font-size:11px;line-height:15px;letter-spacing:-0.165px;color:#000;">Mémoire, Écriture</div>
<svg style="left:582px;top:714.5px" width="4" height="7" viewBox="0 0 4 7"><polygon points="0,0 4,3.5 0,7" fill="#000"/></svg>
<div class="s" style="left:455px;top:735.19px;font-size:11px;line-height:15px;letter-spacing:-0.151px;color:#000;">Mémoire, Exécution</div>
<svg style="left:582px;top:736.5px" width="4" height="7" viewBox="0 0 4 7"><polygon points="0,0 4,3.5 0,7" fill="#000"/></svg>
<div style="left:594px;top:590px;width:102px;height:68px;background:#f2f2f2;border:1px solid #cccccc;box-shadow:2px 2px 3px rgba(0,0,0,0.45)"></div>
<div class="s" style="left:628px;top:597.19px;font-size:11px;line-height:15px;letter-spacing:0.141px;color:#000;">Octet</div>
<div class="s" style="left:628px;top:619.19px;font-size:11px;line-height:15px;letter-spacing:-0.023px;color:#000;">Word</div>
<div style="left:597px;top:636px;width:98px;height:22px;background:#91c9f7;"></div>
<div class="s" style="left:628px;top:641.19px;font-size:11px;line-height:15px;letter-spacing:-0.159px;color:#000;">Dword</div>
<svg style="left:154px;top:436px" width="18" height="18" viewBox="0 0 18 18"><path d="M2.5,0.5 H10 L13.5,4 V15.5 H2.5 Z" fill="#c4daf2" stroke="#7f9fc8" stroke-width="0.9"/><path d="M10,0.5 V4 H13.5 Z" fill="#eef4fb" stroke="#7f9fc8" stroke-width="0.7"/><text x="8" y="8.8" font-family="Liberation Serif" font-size="5.6" font-weight="bold" text-anchor="middle" fill="#333">01</text><text x="8" y="13.8" font-family="Liberation Serif" font-size="5.6" font-weight="bold" text-anchor="middle" fill="#333">10</text></svg>
<svg style="left:154px;top:458px" width="18" height="18" viewBox="0 0 18 18"><path d="M1.5,1.5 H7 L9.5,4 V12.5 H1.5 Z" fill="#f4f7fa" stroke="#9aa4b0" stroke-width="0.9"/><path d="M5.5,4.5 H11 L14,7.5 V16 H5.5 Z" fill="#fbfcfe" stroke="#8f99a6" stroke-width="0.9"/><path d="M11,4.5 V7.5 H14" fill="#e6ebf1" stroke="#8f99a6" stroke-width="0.7"/></svg>
<svg style="left:154px;top:480px" width="18" height="18" viewBox="0 0 18 18"><rect x="0.5" y="0.5" width="14.5" height="14.5" rx="1.5" fill="#3c9a3c" stroke="#1e5e1e" stroke-width="1"/><g fill="#e8d45a"><rect x="3" y="1.4" width="1" height="1.6"/><rect x="5.4" y="1.4" width="1" height="1.6"/><rect x="7.8" y="1.4" width="1" height="1.6"/><rect x="10.2" y="1.4" width="1" height="1.6"/><rect x="3" y="12.6" width="1" height="1.6"/><rect x="5.4" y="12.6" width="1" height="1.6"/><rect x="7.8" y="12.6" width="1" height="1.6"/><rect x="10.2" y="12.6" width="1" height="1.6"/><rect x="1.3" y="4.6" width="1.5" height="0.9"/><rect x="1.3" y="7.3" width="1.5" height="0.9"/><rect x="1.3" y="10" width="1.5" height="0.9"/><rect x="12.8" y="4.6" width="1.5" height="0.9"/><rect x="12.8" y="7.3" width="1.5" height="0.9"/><rect x="12.8" y="10" width="1.5" height="0.9"/></g><rect x="2.8" y="3.2" width="10" height="9.2" rx="0.8" fill="#2a2d2a"/><text x="7.8" y="10.6" font-family="Liberation Sans" font-weight="bold" font-size="7.4" text-anchor="middle" fill="#f4f4f4">32</text></svg>
<svg style="left:154px;top:502px" width="18" height="18" viewBox="0 0 18 18"><g transform="translate(0.5,0)"><rect width="15" height="7.8" fill="#2f922f"/><rect x="1.3" y="1.404" width="3.53333" height="3.276" fill="#1d2a1d"/><rect x="5.63333" y="1.404" width="3.53333" height="3.276" fill="#1d2a1d"/><rect x="9.96667" y="1.404" width="3.53333" height="3.276" fill="#1d2a1d"/><rect x="1.2" y="5.772" width="1.46667" height="2.028" fill="#e8d45a"/><rect x="3.36667" y="5.772" width="1.46667" height="2.028" fill="#e8d45a"/><rect x="5.53333" y="5.772" width="1.46667" height="2.028" fill="#e8d45a"/><rect x="7.7" y="5.772" width="1.46667" height="2.028" fill="#e8d45a"/><rect x="9.86667" y="5.772" width="1.46667" height="2.028" fill="#e8d45a"/><rect x="12.0333" y="5.772" width="1.46667" height="2.028" fill="#e8d45a"/></g><circle cx="4.8" cy="12.6" r="2.4" fill="#dbe9f8" stroke="#8a8f96" stroke-width="0.9"/><path d="M3.2,14.4 L0.8,16.8" stroke="#8a8f96" stroke-width="1.2"/><text x="12" y="16" font-family="Liberation Sans" font-size="8" text-anchor="middle" fill="#222">@</text></svg>
<svg style="left:154px;top:524px" width="18" height="18" viewBox="0 0 18 18"><g transform="translate(8,7.8) rotate(-43)"><path d="M-9.6,-3.3 H6.2 L9.8,0 L6.2,3.3 H-9.6 Z" fill="#fbfdff" stroke="#8fa9c2" stroke-width="0.9"/><rect x="-8" y="-1.5" width="10.4" height="3" fill="#2f8fea"/><circle cx="6.4" cy="0" r="1.1" fill="#fff" stroke="#8fa9c2" stroke-width="0.6"/></g><path d="M7.8,11.6 H15 M11.4,8 V15.2" stroke="#1e8a1e" stroke-width="3.2"/><path d="M8.3,11.6 H14.5 M11.4,8.5 V14.7" stroke="#3fd03f" stroke-width="2"/></svg>
<svg style="left:154px;top:546px" width="18" height="18" viewBox="0 0 18 18"><circle cx="2.9" cy="3.4" r="2.7" fill="#c98f3e" stroke="#9a6424" stroke-width="0.5"/><circle cx="12.5" cy="3.4" r="2.7" fill="#c98f3e" stroke="#9a6424" stroke-width="0.5"/><circle cx="3.1" cy="3.7" r="1.4" fill="#8a4a2a"/><circle cx="12.3" cy="3.7" r="1.4" fill="#8a4a2a"/><ellipse cx="7.7" cy="8.8" rx="7.6" ry="6.3" fill="#cf9646" stroke="#9a6424" stroke-width="0.5"/><ellipse cx="2.6" cy="10.4" rx="2.2" ry="2.6" fill="#ecd09a"/><ellipse cx="12.8" cy="10.4" rx="2.2" ry="2.6" fill="#ecd09a"/><ellipse cx="7.7" cy="11.4" rx="3.2" ry="2.6" fill="#f8ecd8"/><ellipse cx="7.7" cy="10.6" rx="1.3" ry="1" fill="#151515"/><ellipse cx="4.8" cy="8.3" rx="0.9" ry="1.1" fill="#151515"/><ellipse cx="10.6" cy="8.3" rx="0.9" ry="1.1" fill="#151515"/><path d="M5,4.6 Q7.7,3.4 10.4,4.6" stroke="#8a4a2a" stroke-width="1" fill="none"/></svg>
<svg style="left:154px;top:568px" width="18" height="18" viewBox="0 0 18 18"><g transform="translate(7.8,8) rotate(-45.8)"><rect x="-6.6" y="-1.8" width="13.4" height="3.6" fill="#f4cf4e" stroke="#a27c1c" stroke-width="0.5"/><path d="M-6.6,-0.5 H6.8 M-6.6,0.7 H6.8" stroke="#d8a92e" stroke-width="0.4"/><path d="M-6.6,-1.8 L-9.6,0 L-6.6,1.8 Z" fill="#ecd6a4" stroke="#a27c1c" stroke-width="0.4"/><path d="M-8.6,-0.6 L-10,0 L-8.6,0.6 Z" fill="#111"/><rect x="6.8" y="-1.8" width="1.4" height="3.6" fill="#e8e8ec" stroke="#9a9aa2" stroke-width="0.3"/><rect x="8.2" y="-1.8" width="2.2" height="3.6" rx="0.6" fill="#ea4e58"/></g></svg>
<svg style="left:154px;top:590px" width="18" height="18" viewBox="0 0 18 18"><defs><radialGradient id="rg1" cx="0.35" cy="0.3" r="0.8"><stop offset="0" stop-color="#ff9a9a"/><stop offset="0.35" stop-color="#e02020"/><stop offset="1" stop-color="#8e0a0a"/></radialGradient></defs><circle cx="7.6" cy="8" r="3.6" fill="url(#rg1)"/></svg>
<svg style="left:154px;top:612px" width="18" height="18" viewBox="0 0 18 18"><path d="M4.5,0.8 H11 L14.5,4.2 V14.5 H4.5 Z" fill="#f6f8fb" stroke="#a7b0bc" stroke-width="0.9"/><circle cx="7.2" cy="8.6" r="3.6" fill="#d6e8fa" stroke="#7c848e" stroke-width="1.1"/><path d="M4.6,11.4 L0.8,15.4" stroke="#7c848e" stroke-width="1.6"/></svg>
<svg style="left:154px;top:634px" width="18" height="18" viewBox="0 0 18 18"><rect x="1.4" y="0.6" width="4" height="4" rx="0.8" fill="#333"/><rect x="9.6" y="0.6" width="4" height="4" rx="0.8" fill="#333"/><path d="M0.6,15 L1.6,4 H6.2 L6.8,15 Z" fill="#2a2a2a"/><path d="M8.2,15 L8.8,4 H13.4 L14.4,15 Z" fill="#2a2a2a"/><rect x="5.6" y="5" width="3.8" height="4.6" fill="#444"/><rect x="0.6" y="12" width="6.2" height="3" fill="#555"/><rect x="8.2" y="12" width="6.2" height="3" fill="#555"/></svg>
<svg style="left:154px;top:656px" width="18" height="18" viewBox="0 0 18 18"><path d="M2.2,7.2 A5.5,5.5 0 0 1 11.4,3.6" fill="none" stroke="#4aa3f0" stroke-width="3"/><polygon points="8.8,6.6 14.8,6.2 14.2,0" fill="#3d98ec"/><path d="M12.8,8.8 A5.5,5.5 0 0 1 3.6,12.4" fill="none" stroke="#4aa3f0" stroke-width="3"/><polygon points="6.2,9.4 0.2,9.8 0.8,16" fill="#3d98ec"/><path d="M2.4,6.4 A5,5 0 0 1 9.6,3.2" fill="none" stroke="#a9d6fa" stroke-width="0.9"/><path d="M12.6,9.6 A5,5 0 0 1 5.4,12.8" fill="none" stroke="#a9d6fa" stroke-width="0.9"/></svg>
<svg style="left:154px;top:678px" width="18" height="18" viewBox="0 0 18 18"><g transform="translate(0.5,0)"><rect width="15" height="7.8" fill="#2f922f"/><rect x="1.3" y="1.404" width="3.53333" height="3.276" fill="#1d2a1d"/><rect x="5.63333" y="1.404" width="3.53333" height="3.276" fill="#1d2a1d"/><rect x="9.96667" y="1.404" width="3.53333" height="3.276" fill="#1d2a1d"/><rect x="1.2" y="5.772" width="1.46667" height="2.028" fill="#e8d45a"/><rect x="3.36667" y="5.772" width="1.46667" height="2.028" fill="#e8d45a"/><rect x="5.53333" y="5.772" width="1.46667" height="2.028" fill="#e8d45a"/><rect x="7.7" y="5.772" width="1.46667" height="2.028" fill="#e8d45a"/><rect x="9.86667" y="5.772" width="1.46667" height="2.028" fill="#e8d45a"/><rect x="12.0333" y="5.772" width="1.46667" height="2.028" fill="#e8d45a"/></g><path d="M7.8,12.6 H15 M11.4,9 V16.2" stroke="#1e8a1e" stroke-width="3.2"/><path d="M8.3,12.6 H14.5 M11.4,9.5 V15.7" stroke="#3fd03f" stroke-width="2"/></svg>
<svg style="left:154px;top:700px" width="18" height="18" viewBox="0 0 18 18"><path d="M2,8 L4,4.4 H11.4 L13.4,8 Z" fill="#bcd9f5" stroke="#4a78b0" stroke-width="0.7"/><rect x="0.6" y="8" width="14.4" height="5" rx="1.6" fill="#4f94dc" stroke="#2f64a8" stroke-width="0.7"/><rect x="1.4" y="12.4" width="3" height="2.6" fill="#222"/><rect x="11" y="12.4" width="3" height="2.6" fill="#222"/><rect x="2" y="9.4" width="2.4" height="1.6" fill="#ffe680"/><rect x="11.2" y="9.4" width="2.4" height="1.6" fill="#ffe680"/><rect x="6.2" y="10.4" width="3.2" height="1.6" fill="#f0c030"/><path d="M7,3 H12 V0.6 L16.4,4 L12,7.4 V5 H7 Z" fill="#3a8ee8" stroke="#1f6fcb" stroke-width="0.5"/></svg>
<svg style="left:154px;top:731px" width="18" height="18" viewBox="0 0 18 18"><circle cx="7.8" cy="7.6" r="7.2" fill="#f7c93a" stroke="#c48a12" stroke-width="0.8"/><path d="M1.4,5 H14.2 V6.4 Q13.6,9 11,8.6 Q9,8.4 8.6,6.4 H7 Q6.6,8.4 4.6,8.6 Q2,9 1.4,6.4 Z" fill="#1a1a1a"/><path d="M4.6,11 Q7.8,13 11,11" fill="none" stroke="#7a4a0a" stroke-width="0.9"/></svg>
<svg style="left:154px;top:753px" width="18" height="18" viewBox="0 0 18 18"><text x="1.5" y="13.5" font-family="Liberation Serif" font-weight="bold" font-size="12" fill="#333">A</text><text x="10.6" y="13.5" font-family="Liberation Serif" font-weight="bold" font-size="7" fill="#333">2</text></svg>
<svg style="left:154px;top:775px" width="18" height="18" viewBox="0 0 18 18"><rect x="2" y="3.6" width="11.4" height="9.4" rx="1.4" fill="#e03a3e" stroke="#b01c22" stroke-width="0.6"/><text x="7.7" y="11" font-family="Liberation Sans" font-weight="bold" font-size="7.4" text-anchor="middle" fill="#fff">42</text></svg>
<svg style="left:154px;top:797px" width="18" height="18" viewBox="0 0 18 18"><path d="M7.6,0.6 Q12,8 12,11 A4.4,4.4 0 0 1 3.2,11 Q3.2,8 7.6,0.6 Z" fill="#b5d9f5" stroke="#6fa8dc" stroke-width="0.9"/><path d="M5,11 A2.6,2.6 0 0 0 7.6,13.6" fill="none" stroke="#fff" stroke-width="1"/></svg>
<svg style="left:154px;top:819px" width="18" height="18" viewBox="0 0 18 18"><rect x="1.4" y="0.8" width="11.6" height="14.4" rx="1" fill="#3f86d8" stroke="#1f4f98" stroke-width="0.9"/><rect x="1.4" y="0.8" width="2" height="14.4" fill="#2a2a2a"/><rect x="13" y="2.4" width="2" height="3.4" fill="#e8e8e8" stroke="#999" stroke-width="0.4"/><rect x="13" y="6.6" width="2" height="3.4" fill="#e8e8e8" stroke="#999" stroke-width="0.4"/><rect x="13" y="10.8" width="2" height="3.4" fill="#e8e8e8" stroke="#999" stroke-width="0.4"/><text x="8.2" y="11" font-family="Liberation Sans" font-size="8.4" font-weight="bold" text-anchor="middle" fill="#e8f2ff">@</text></svg>
<svg style="left:154px;top:841px" width="18" height="18" viewBox="0 0 18 18"><rect x="0.5" y="0.5" width="14.5" height="14.5" rx="1.2" fill="#3fa03f" stroke="#1e6e1e" stroke-width="1"/><rect x="0.5" y="10" width="14.5" height="5" fill="#2a7a2a"/><g fill="#e8d45a"><circle cx="2" cy="2" r="0.7"/><circle cx="13.6" cy="2" r="0.7"/><circle cx="2" cy="13.6" r="0.7"/><circle cx="13.6" cy="13.6" r="0.7"/><rect x="5" y="2.4" width="0.9" height="1.6"/><rect x="7.4" y="2.4" width="0.9" height="1.6"/><rect x="9.8" y="2.4" width="0.9" height="1.6"/><rect x="5" y="11.6" width="0.9" height="1.6"/><rect x="7.4" y="11.6" width="0.9" height="1.6"/><rect x="9.8" y="11.6" width="0.9" height="1.6"/><rect x="2.4" y="5" width="1.6" height="0.9"/><rect x="2.4" y="7.4" width="1.6" height="0.9"/><rect x="2.4" y="9.8" width="1.6" height="0.9"/><rect x="11.6" y="5" width="1.6" height="0.9"/><rect x="11.6" y="7.4" width="1.6" height="0.9"/><rect x="11.6" y="9.8" width="1.6" height="0.9"/></g><rect x="4" y="4" width="7.6" height="7.6" rx="0.8" fill="#33373a" stroke="#1c1e20" stroke-width="0.5"/></svg>
<svg style="left:428px;top:592px" width="18" height="18" viewBox="0 0 18 18"><defs><radialGradient id="rg2" cx="0.35" cy="0.3" r="0.8"><stop offset="0" stop-color="#ff9a9a"/><stop offset="0.35" stop-color="#e02020"/><stop offset="1" stop-color="#8e0a0a"/></radialGradient></defs><circle cx="6.5" cy="8.7" r="3.6" fill="url(#rg2)"/><path d="M8.6,13.4 l2.2,2.4 l4,-5" fill="none" stroke="#2db52d" stroke-width="2"/></svg>
<svg style="left:428px;top:614px" width="18" height="18" viewBox="0 0 18 18"><defs><radialGradient id="rg3" cx="0.35" cy="0.3" r="0.8"><stop offset="0" stop-color="#ff9a9a"/><stop offset="0.35" stop-color="#e02020"/><stop offset="1" stop-color="#8e0a0a"/></radialGradient></defs><circle cx="6.5" cy="8.7" r="3.6" fill="url(#rg3)"/><g transform="translate(6,8.6)"><path d="M0.4,9.6 L1.2,7 L7.2,1 L8.8,2.6 L2.8,8.6 Z" fill="#f4cf4e" stroke="#9a7420" stroke-width="0.45"/><path d="M7.2,1 L8.2,0 L9.8,1.6 L8.8,2.6 Z" fill="#ea4e58"/><path d="M0.4,9.6 L0.9,8 L2,9.1 Z" fill="#111"/></g></svg>
<svg style="left:428px;top:636px" width="18" height="18" viewBox="0 0 18 18"><defs><radialGradient id="rg4" cx="0.35" cy="0.3" r="0.8"><stop offset="0" stop-color="#ff9a9a"/><stop offset="0.35" stop-color="#e02020"/><stop offset="1" stop-color="#8e0a0a"/></radialGradient></defs><circle cx="6.5" cy="8.7" r="3.6" fill="url(#rg4)"/><g transform="translate(8,12.4)"><path d="M0,1.8 H4 V0 L8,3 L4,6 V4.2 H0 Z" fill="#3a8ee8" stroke="#1f6fcb" stroke-width="0.5"/></g></svg>
<svg style="left:428px;top:667px" width="18" height="18" viewBox="0 0 18 18"><g transform="translate(-1,1)"><rect width="10.4" height="4.6" fill="#2f922f"/><rect x="1.3" y="0.828" width="2" height="1.932" fill="#1d2a1d"/><rect x="4.1" y="0.828" width="2" height="1.932" fill="#1d2a1d"/><rect x="6.9" y="0.828" width="2" height="1.932" fill="#1d2a1d"/><rect x="1.2" y="3.404" width="0.7" height="1.196" fill="#e8d45a"/><rect x="2.6" y="3.404" width="0.7" height="1.196" fill="#e8d45a"/><rect x="4" y="3.404" width="0.7" height="1.196" fill="#e8d45a"/><rect x="5.4" y="3.404" width="0.7" height="1.196" fill="#e8d45a"/><rect x="6.8" y="3.404" width="0.7" height="1.196" fill="#e8d45a"/><rect x="8.2" y="3.404" width="0.7" height="1.196" fill="#e8d45a"/></g><defs><radialGradient id="rg5" cx="0.35" cy="0.3" r="0.8"><stop offset="0" stop-color="#ff9a9a"/><stop offset="0.35" stop-color="#e02020"/><stop offset="1" stop-color="#8e0a0a"/></radialGradient></defs><circle cx="6.5" cy="8.2" r="3.5" fill="url(#rg5)"/><path d="M8.6,13 l2.2,2.4 l4,-5" fill="none" stroke="#2db52d" stroke-width="2"/></svg>
<svg style="left:428px;top:689px" width="18" height="18" viewBox="0 0 18 18"><g transform="translate(-1,1)"><rect width="10.4" height="4.6" fill="#2f922f"/><rect x="1.3" y="0.828" width="2" height="1.932" fill="#1d2a1d"/><rect x="4.1" y="0.828" width="2" height="1.932" fill="#1d2a1d"/><rect x="6.9" y="0.828" width="2" height="1.932" fill="#1d2a1d"/><rect x="1.2" y="3.404" width="0.7" height="1.196" fill="#e8d45a"/><rect x="2.6" y="3.404" width="0.7" height="1.196" fill="#e8d45a"/><rect x="4" y="3.404" width="0.7" height="1.196" fill="#e8d45a"/><rect x="5.4" y="3.404" width="0.7" height="1.196" fill="#e8d45a"/><rect x="6.8" y="3.404" width="0.7" height="1.196" fill="#e8d45a"/><rect x="8.2" y="3.404" width="0.7" height="1.196" fill="#e8d45a"/></g><defs><radialGradient id="rg6" cx="0.35" cy="0.3" r="0.8"><stop offset="0" stop-color="#ff9a9a"/><stop offset="0.35" stop-color="#e02020"/><stop offset="1" stop-color="#8e0a0a"/></radialGradient></defs><circle cx="6.5" cy="8.2" r="3.5" fill="url(#rg6)"/><circle cx="9.6" cy="10" r="2.6" fill="#e4eefa" stroke="#8a8f96" stroke-width="0.8"/><path d="M8,12 L5.4,15" stroke="#6a6f76" stroke-width="1.3"/></svg>
<svg style="left:428px;top:711px" width="18" height="18" viewBox="0 0 18 18"><g transform="translate(-1,1)"><rect width="10.4" height="4.6" fill="#2f922f"/><rect x="1.3" y="0.828" width="2" height="1.932" fill="#1d2a1d"/><rect x="4.1" y="0.828" width="2" height="1.932" fill="#1d2a1d"/><rect x="6.9" y="0.828" width="2" height="1.932" fill="#1d2a1d"/><rect x="1.2" y="3.404" width="0.7" height="1.196" fill="#e8d45a"/><rect x="2.6" y="3.404" width="0.7" height="1.196" fill="#e8d45a"/><rect x="4" y="3.404" width="0.7" height="1.196" fill="#e8d45a"/><rect x="5.4" y="3.404" width="0.7" height="1.196" fill="#e8d45a"/><rect x="6.8" y="3.404" width="0.7" height="1.196" fill="#e8d45a"/><rect x="8.2" y="3.404" width="0.7" height="1.196" fill="#e8d45a"/></g><defs><radialGradient id="rg7" cx="0.35" cy="0.3" r="0.8"><stop offset="0" stop-color="#ff9a9a"/><stop offset="0.35" stop-color="#e02020"/><stop offset="1" stop-color="#8e0a0a"/></radialGradient></defs><circle cx="6.5" cy="8.2" r="3.5" fill="url(#rg7)"/><g transform="translate(6,8)"><path d="M0.4,9.6 L1.2,7 L7.2,1 L8.8,2.6 L2.8,8.6 Z" fill="#f4cf4e" stroke="#9a7420" stroke-width="0.45"/><path d="M7.2,1 L8.2,0 L9.8,1.6 L8.8,2.6 Z" fill="#ea4e58"/><path d="M0.4,9.6 L0.9,8 L2,9.1 Z" fill="#111"/></g></svg>
<svg style="left:428px;top:733px" width="18" height="18" viewBox="0 0 18 18"><g transform="translate(-1,1)"><rect width="10.4" height="4.6" fill="#2f922f"/><rect x="1.3" y="0.828" width="2" height="1.932" fill="#1d2a1d"/><rect x="4.1" y="0.828" width="2" height="1.932" fill="#1d2a1d"/><rect x="6.9" y="0.828" width="2" height="1.932" fill="#1d2a1d"/><rect x="1.2" y="3.404" width="0.7" height="1.196" fill="#e8d45a"/><rect x="2.6" y="3.404" width="0.7" height="1.196" fill="#e8d45a"/><rect x="4" y="3.404" width="0.7" height="1.196" fill="#e8d45a"/><rect x="5.4" y="3.404" width="0.7" height="1.196" fill="#e8d45a"/><rect x="6.8" y="3.404" width="0.7" height="1.196" fill="#e8d45a"/><rect x="8.2" y="3.404" width="0.7" height="1.196" fill="#e8d45a"/></g><defs><radialGradient id="rg8" cx="0.35" cy="0.3" r="0.8"><stop offset="0" stop-color="#ff9a9a"/><stop offset="0.35" stop-color="#e02020"/><stop offset="1" stop-color="#8e0a0a"/></radialGradient></defs><circle cx="6.5" cy="8.2" r="3.5" fill="url(#rg8)"/><g transform="translate(8,12)"><path d="M0,1.8 H4 V0 L8,3 L4,6 V4.2 H0 Z" fill="#3a8ee8" stroke="#1f6fcb" stroke-width="0.5"/></g></svg>
<svg style="left:602px;top:595px" width="18" height="20" viewBox="0 0 18 20"><defs><radialGradient id="rg9" cx="0.35" cy="0.3" r="0.8"><stop offset="0" stop-color="#ff9a9a"/><stop offset="0.35" stop-color="#e02020"/><stop offset="1" stop-color="#8e0a0a"/></radialGradient></defs><circle cx="5.2" cy="8.5" r="3.5" fill="url(#rg9)"/><text x="9.8" y="17" font-family="Liberation Sans" font-weight="bold" font-size="6.4" fill="#000">B</text></svg>
<svg style="left:602px;top:617px" width="18" height="20" viewBox="0 0 18 20"><defs><radialGradient id="rg10" cx="0.35" cy="0.3" r="0.8"><stop offset="0" stop-color="#ff9a9a"/><stop offset="0.35" stop-color="#e02020"/><stop offset="1" stop-color="#8e0a0a"/></radialGradient></defs><circle cx="5.2" cy="8.5" r="3.5" fill="url(#rg10)"/><text x="8.6" y="17" font-family="Liberation Sans" font-weight="bold" font-size="6.4" fill="#000">W</text></svg>
<svg style="left:602px;top:639px" width="18" height="20" viewBox="0 0 18 20"><defs><radialGradient id="rg11" cx="0.35" cy="0.3" r="0.8"><stop offset="0" stop-color="#ff9a9a"/><stop offset="0.35" stop-color="#e02020"/><stop offset="1" stop-color="#8e0a0a"/></radialGradient></defs><circle cx="5.2" cy="8.5" r="3.5" fill="url(#rg11)"/><text x="9.8" y="17" font-family="Liberation Sans" font-weight="bold" font-size="6.4" fill="#000">D</text></svg>
<svg style="left:677px;top:650px" width="14" height="20" viewBox="0 0 14 20"><path d="M1,1 V15.6 L4.6,12.4 L7.2,18.4 L9.6,17.4 L7,11.6 H11.8 Z" fill="#fff" stroke="#000" stroke-width="1"/></svg>
</body></html>
